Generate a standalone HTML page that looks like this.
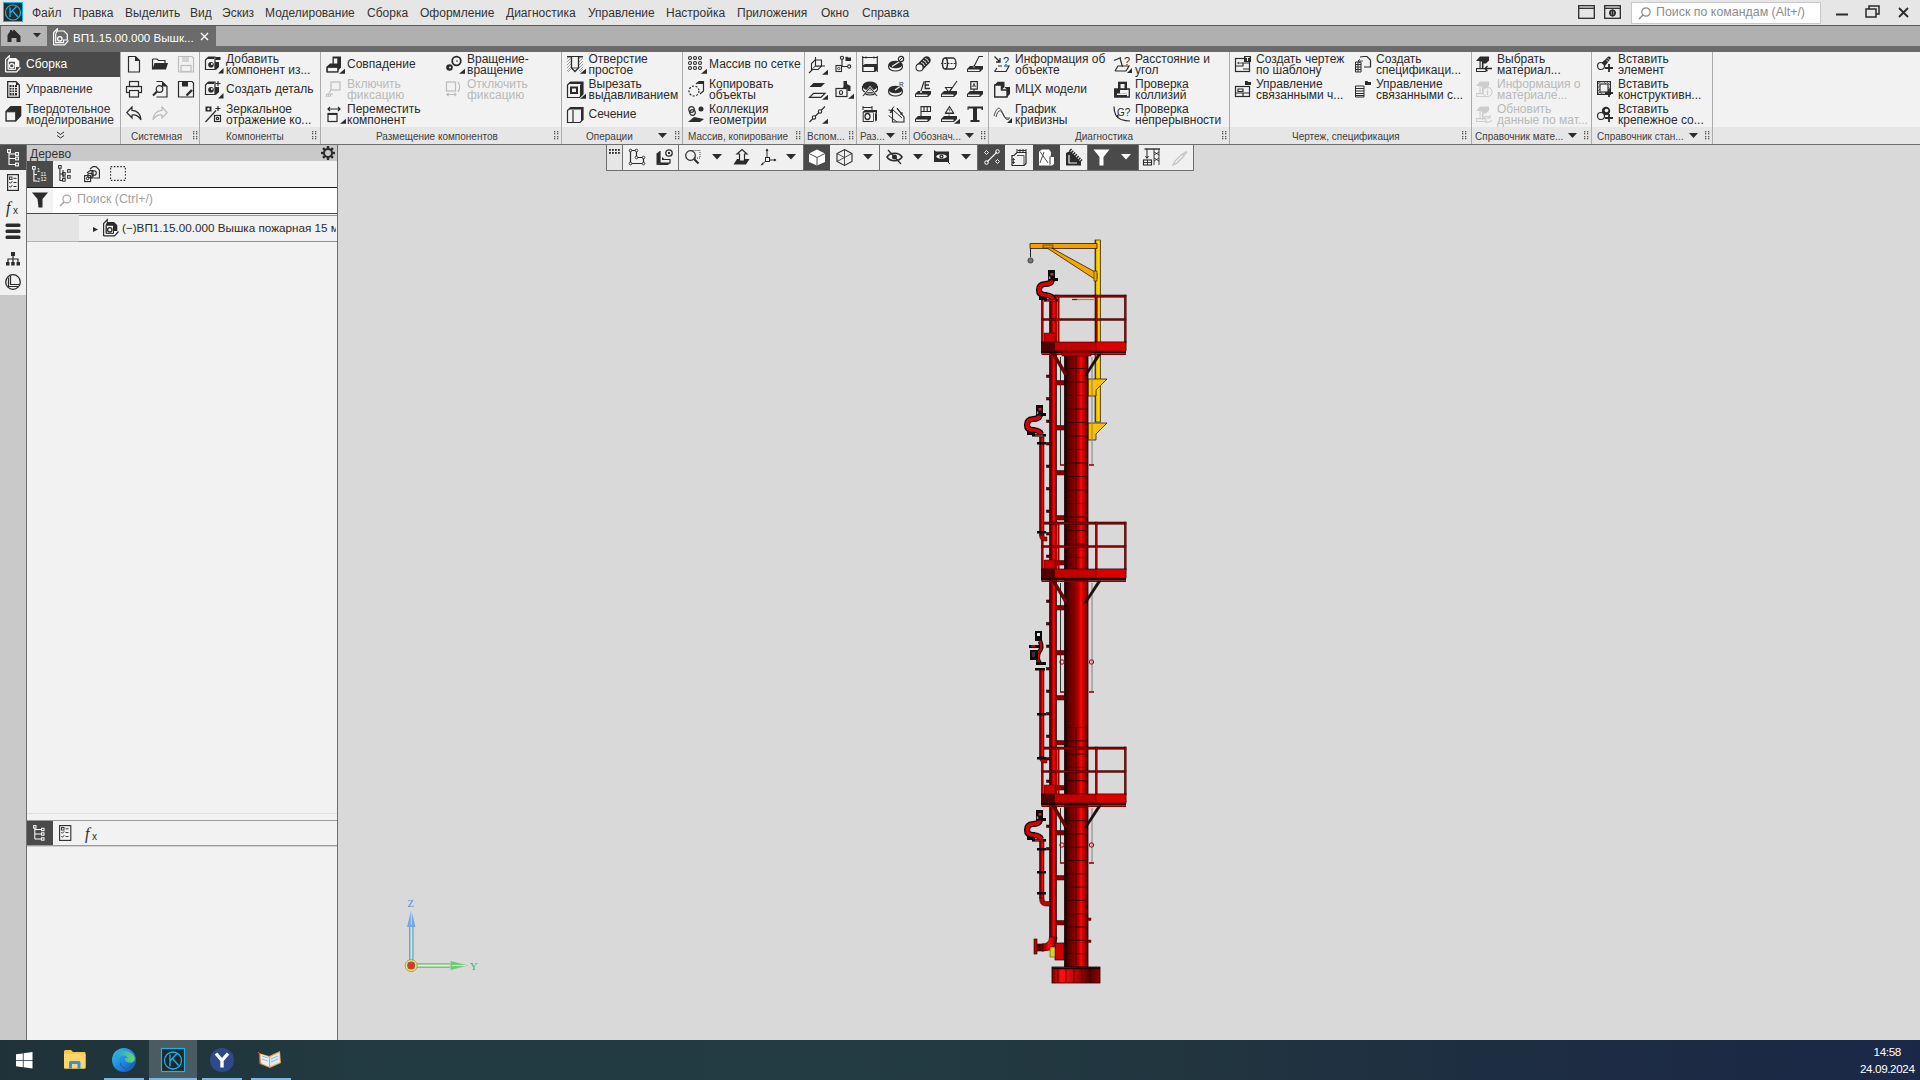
<!DOCTYPE html><html><head><meta charset="utf-8"><style>
*{margin:0;padding:0;box-sizing:border-box}
html,body{width:1920px;height:1080px;overflow:hidden;background:#d9d9d9;font-family:"Liberation Sans",sans-serif;font-size:12px;color:#2b2b2b}
.a{position:absolute}
.t{position:absolute;white-space:nowrap;line-height:1}
svg{position:absolute}
</style></head><body>
<div class="a" style="left:0px;top:0px;width:1920px;height:25px;background:#e6e6e6;"></div>
<svg class="a" style="left:3px;top:2px" width="20" height="20" viewBox="0 0 20 20"><rect x="0.5" y="0.5" width="19" height="19" fill="#2a2a2a" stroke="#10b8f0"/><circle cx="10" cy="10.5" r="7.5" fill="none" stroke="#10b8f0" stroke-width="1.2"/><path d="M7 5.5V15M7 11L13.5 4.5M9.5 9L15 15" stroke="#10b8f0" stroke-width="1.3" fill="none"/></svg>
<div class="t" style="left:32px;top:7px;font-size:12px;color:#333;">Файл</div>
<div class="t" style="left:73px;top:7px;font-size:12px;color:#333;">Правка</div>
<div class="t" style="left:125px;top:7px;font-size:12px;color:#333;">Выделить</div>
<div class="t" style="left:190px;top:7px;font-size:12px;color:#333;">Вид</div>
<div class="t" style="left:222px;top:7px;font-size:12px;color:#333;">Эскиз</div>
<div class="t" style="left:265px;top:7px;font-size:12px;color:#333;">Моделирование</div>
<div class="t" style="left:367px;top:7px;font-size:12px;color:#333;">Сборка</div>
<div class="t" style="left:420px;top:7px;font-size:12px;color:#333;">Оформление</div>
<div class="t" style="left:506px;top:7px;font-size:12px;color:#333;">Диагностика</div>
<div class="t" style="left:588px;top:7px;font-size:12px;color:#333;">Управление</div>
<div class="t" style="left:666px;top:7px;font-size:12px;color:#333;">Настройка</div>
<div class="t" style="left:737px;top:7px;font-size:12px;color:#333;">Приложения</div>
<div class="t" style="left:821px;top:7px;font-size:12px;color:#333;">Окно</div>
<div class="t" style="left:862px;top:7px;font-size:12px;color:#333;">Справка</div>
<svg class="a" style="left:1578px;top:5px" width="18" height="15" viewBox="0 0 18 15"><rect x="0.7" y="0.7" width="15.6" height="12.6" fill="none" stroke="#2b2b2b" stroke-width="1.3"/><path d="M1 3.3H16" stroke="#2b2b2b" stroke-width="1.3"/></svg>
<svg class="a" style="left:1604px;top:5px" width="18" height="15" viewBox="0 0 18 15"><rect x="0.7" y="0.7" width="15.6" height="12.6" fill="none" stroke="#2b2b2b" stroke-width="1.3"/><path d="M1 3.3H16" stroke="#2b2b2b" stroke-width="1.3"/><circle cx="8.5" cy="8" r="2.6" fill="none" stroke="#2b2b2b" stroke-width="1.6"/><path d="M8.5 4.5V11.5M5 8H12" stroke="#2b2b2b" stroke-width="1"/></svg>
<div class="a" style="left:1631px;top:2px;width:190px;height:22px;background:#ffffff;border:1px solid #c8c8c8"></div>
<svg class="a" style="left:1638px;top:6px" width="14" height="14" viewBox="0 0 14 14"><circle cx="8" cy="6" r="4.2" fill="none" stroke="#8a8a8a" stroke-width="1.2"/><path d="M5 9L1 13" stroke="#8a8a8a" stroke-width="1.5"/></svg>
<div class="t" style="left:1656px;top:6px;font-size:12.4px;color:#8c8c8c;">Поиск по командам (Alt+/)</div>
<svg class="a" style="left:1834px;top:6px" width="16" height="14" viewBox="0 0 16 14"><path d="M2 8.5H14" stroke="#2b2b2b" stroke-width="2"/></svg>
<svg class="a" style="left:1865px;top:5px" width="16" height="14" viewBox="0 0 16 14"><rect x="1" y="4" width="10" height="8" fill="none" stroke="#2b2b2b" stroke-width="1.5"/><path d="M4 4V1H14V9H11" fill="none" stroke="#2b2b2b" stroke-width="1.5"/></svg>
<svg class="a" style="left:1897px;top:6px" width="14" height="14" viewBox="0 0 14 14"><path d="M2 2L11 11M11 2L2 11" stroke="#2b2b2b" stroke-width="1.8"/></svg>
<div class="a" style="left:0px;top:25px;width:1920px;height:27px;background:#6b6b6b;"></div>
<div class="a" style="left:0px;top:25px;width:1920px;height:1px;background:#5c5c5c;"></div>
<div class="a" style="left:1px;top:26px;width:46px;height:20px;background:#b4b4b4;"></div>
<svg class="a" style="left:7px;top:29px" width="14" height="14" viewBox="0 0 14 14"><path d="M0.5 13V6L3 2.5V1H5V2.5L7 0.5L13.5 7V13H9.5V9H4.5V13Z" fill="#2b2b2b"/></svg>
<svg class="a" style="left:33px;top:33px" width="8" height="5" viewBox="0 0 8 5"><path d="M0 0H8L4 4.5Z" fill="#2b2b2b"/></svg>
<div class="a" style="left:216px;top:26px;width:1704px;height:20px;background:#b0b0b0;"></div>
<svg class="a" style="left:53px;top:28px" width="17" height="18" viewBox="0 0 17 18"><path d="M0.6 17V4.5L4.3 0.8V2.8" fill="none" stroke="#fff" stroke-width="1.2"/><path d="M0.6 16.8H11.5L15.5 12.5" fill="none" stroke="#fff" stroke-width="1.2"/><path d="M4 3H11L14.3 6.3V12H10.5V14.6H2.7V6Z" fill="none" stroke="#fff" stroke-width="1.2"/><circle cx="6.8" cy="10.8" r="2.2" fill="none" stroke="#fff" stroke-width="1.3"/></svg>
<div class="t" style="left:73px;top:32px;font-size:11.6px;color:#ffffff;">ВП1.15.00.000 Вышк...</div>
<svg class="a" style="left:200px;top:32px" width="9" height="9" viewBox="0 0 9 9"><path d="M1 1L8 8M8 1L1 8" stroke="#fff" stroke-width="1.4"/></svg>
<div class="a" style="left:0px;top:52px;width:1920px;height:92px;background:#f2f2f2;"></div>
<div class="a" style="left:0px;top:127px;width:1920px;height:17px;background:#e6e6e6;"></div>
<div class="a" style="left:0px;top:144px;width:1920px;height:1px;background:#6e6e6e;"></div>
<div class="a" style="left:0px;top:52px;width:120px;height:25px;background:#4a4a4a;"></div>
<svg class="a" style="left:5px;top:55px" width="17" height="18" viewBox="0 0 17 18"><path d="M0.6 17V4.5L4.3 0.8V2.8" fill="none" stroke="#fff" stroke-width="1.2"/><path d="M0.6 16.8H11.5L15.5 12.5" fill="none" stroke="#fff" stroke-width="1.2"/><path d="M4 3H11L14.3 6.3V12H10.5V14.6H2.7V6Z" fill="#fff"/><rect x="3.3" y="6.2" width="7.2" height="8" fill="#4a4a4a"/><path d="M3.3 6.2H10.5V14.3H3.3Z" fill="none" stroke="#fff" stroke-width="1"/><circle cx="6.8" cy="10.8" r="2.2" fill="none" stroke="#fff" stroke-width="1.3"/></svg>
<div class="t" style="left:26px;top:58px;font-size:12px;color:#ffffff;">Сборка</div>
<svg class="a" style="left:7px;top:81px" width="13" height="17" viewBox="0 0 13 17"><path d="M0.7 0.7H9L12.3 4V16.3H0.7Z" fill="none" stroke="#2b2b2b" stroke-width="1.3"/><path d="M9 0.7V4H12.3Z" fill="#2b2b2b"/><rect x="2.5" y="4" width="7.5" height="10.5" fill="#2b2b2b"/><path d="M2.5 6.5H10M2.5 9H10M2.5 11.5H10M5 4V14.5M7.5 4V14.5" stroke="#f2f2f2" stroke-width="0.9"/></svg>
<div class="t" style="left:26px;top:83px;font-size:12px;color:#333;">Управление</div>
<svg class="a" style="left:5px;top:105px" width="17" height="17" viewBox="0 0 17 17"><path d="M0.5 6L5.5 1H16.3V11L11 16.5H0.5Z" fill="#2b2b2b"/><rect x="1.2" y="6.8" width="9.5" height="9" fill="#f2f2f2" stroke="#2b2b2b" stroke-width="1"/></svg>
<div class="t" style="left:26px;top:103px;font-size:12px;color:#333;">Твердотельное</div>
<div class="t" style="left:26px;top:114px;font-size:12px;color:#333;">моделирование</div>
<svg class="a" style="left:56px;top:131px" width="9" height="8" viewBox="0 0 9 8"><path d="M1 1L4.5 3.5L8 1M1 4.5L4.5 7L8 4.5" fill="none" stroke="#2b2b2b" stroke-width="1"/></svg>
<div class="a" style="left:120px;top:52px;width:1px;height:92px;background:#ababab;"></div>
<div class="a" style="left:199px;top:52px;width:1px;height:92px;background:#ababab;"></div>
<div class="a" style="left:320px;top:52px;width:1px;height:92px;background:#ababab;"></div>
<div class="a" style="left:561px;top:52px;width:1px;height:92px;background:#ababab;"></div>
<div class="a" style="left:682px;top:52px;width:1px;height:92px;background:#ababab;"></div>
<div class="a" style="left:804px;top:52px;width:1px;height:92px;background:#ababab;"></div>
<div class="a" style="left:856px;top:52px;width:1px;height:92px;background:#ababab;"></div>
<div class="a" style="left:909px;top:52px;width:1px;height:92px;background:#ababab;"></div>
<div class="a" style="left:988px;top:52px;width:1px;height:92px;background:#ababab;"></div>
<div class="a" style="left:1229px;top:52px;width:1px;height:92px;background:#ababab;"></div>
<div class="a" style="left:1471px;top:52px;width:1px;height:92px;background:#ababab;"></div>
<div class="a" style="left:1591px;top:52px;width:1px;height:92px;background:#ababab;"></div>
<div class="a" style="left:1712px;top:52px;width:1px;height:92px;background:#ababab;"></div>
<div class="t" style="left:131px;top:132px;font-size:10px;color:#3e3e3e;">Системная</div>
<div class="t" style="left:226px;top:132px;font-size:10px;color:#3e3e3e;">Компоненты</div>
<div class="t" style="left:376px;top:132px;font-size:10px;color:#3e3e3e;">Размещение компонентов</div>
<div class="t" style="left:586px;top:132px;font-size:10px;color:#3e3e3e;">Операции</div>
<div class="t" style="left:688px;top:132px;font-size:10px;color:#3e3e3e;">Массив, копирование</div>
<div class="t" style="left:807px;top:132px;font-size:10px;color:#3e3e3e;">Вспом...</div>
<div class="t" style="left:860px;top:132px;font-size:10px;color:#3e3e3e;">Раз...</div>
<div class="t" style="left:913px;top:132px;font-size:10px;color:#3e3e3e;">Обознач...</div>
<div class="t" style="left:1075px;top:132px;font-size:10px;color:#3e3e3e;">Диагностика</div>
<div class="t" style="left:1292px;top:132px;font-size:10px;color:#3e3e3e;">Чертеж, спецификация</div>
<div class="t" style="left:1475px;top:132px;font-size:10px;color:#3e3e3e;">Справочник мате...</div>
<div class="t" style="left:1597px;top:132px;font-size:10px;color:#3e3e3e;">Справочник стан...</div>
<svg class="a" style="left:193px;top:131px" width="6" height="10" viewBox="0 0 6 10"><rect x="0" y="0" width="1.3" height="1.3" fill="#555"/><rect x="0" y="2" width="1.3" height="1.3" fill="#555"/><rect x="0" y="5" width="1.3" height="1.3" fill="#555"/><rect x="0" y="7" width="1.3" height="1.3" fill="#555"/><rect x="3" y="0" width="1.3" height="1.3" fill="#555"/><rect x="3" y="2" width="1.3" height="1.3" fill="#555"/><rect x="3" y="5" width="1.3" height="1.3" fill="#555"/><rect x="3" y="7" width="1.3" height="1.3" fill="#555"/></svg>
<svg class="a" style="left:312px;top:131px" width="6" height="10" viewBox="0 0 6 10"><rect x="0" y="0" width="1.3" height="1.3" fill="#555"/><rect x="0" y="2" width="1.3" height="1.3" fill="#555"/><rect x="0" y="5" width="1.3" height="1.3" fill="#555"/><rect x="0" y="7" width="1.3" height="1.3" fill="#555"/><rect x="3" y="0" width="1.3" height="1.3" fill="#555"/><rect x="3" y="2" width="1.3" height="1.3" fill="#555"/><rect x="3" y="5" width="1.3" height="1.3" fill="#555"/><rect x="3" y="7" width="1.3" height="1.3" fill="#555"/></svg>
<svg class="a" style="left:554px;top:131px" width="6" height="10" viewBox="0 0 6 10"><rect x="0" y="0" width="1.3" height="1.3" fill="#555"/><rect x="0" y="2" width="1.3" height="1.3" fill="#555"/><rect x="0" y="5" width="1.3" height="1.3" fill="#555"/><rect x="0" y="7" width="1.3" height="1.3" fill="#555"/><rect x="3" y="0" width="1.3" height="1.3" fill="#555"/><rect x="3" y="2" width="1.3" height="1.3" fill="#555"/><rect x="3" y="5" width="1.3" height="1.3" fill="#555"/><rect x="3" y="7" width="1.3" height="1.3" fill="#555"/></svg>
<svg class="a" style="left:675px;top:131px" width="6" height="10" viewBox="0 0 6 10"><rect x="0" y="0" width="1.3" height="1.3" fill="#555"/><rect x="0" y="2" width="1.3" height="1.3" fill="#555"/><rect x="0" y="5" width="1.3" height="1.3" fill="#555"/><rect x="0" y="7" width="1.3" height="1.3" fill="#555"/><rect x="3" y="0" width="1.3" height="1.3" fill="#555"/><rect x="3" y="2" width="1.3" height="1.3" fill="#555"/><rect x="3" y="5" width="1.3" height="1.3" fill="#555"/><rect x="3" y="7" width="1.3" height="1.3" fill="#555"/></svg>
<svg class="a" style="left:796px;top:131px" width="6" height="10" viewBox="0 0 6 10"><rect x="0" y="0" width="1.3" height="1.3" fill="#555"/><rect x="0" y="2" width="1.3" height="1.3" fill="#555"/><rect x="0" y="5" width="1.3" height="1.3" fill="#555"/><rect x="0" y="7" width="1.3" height="1.3" fill="#555"/><rect x="3" y="0" width="1.3" height="1.3" fill="#555"/><rect x="3" y="2" width="1.3" height="1.3" fill="#555"/><rect x="3" y="5" width="1.3" height="1.3" fill="#555"/><rect x="3" y="7" width="1.3" height="1.3" fill="#555"/></svg>
<svg class="a" style="left:849px;top:131px" width="6" height="10" viewBox="0 0 6 10"><rect x="0" y="0" width="1.3" height="1.3" fill="#555"/><rect x="0" y="2" width="1.3" height="1.3" fill="#555"/><rect x="0" y="5" width="1.3" height="1.3" fill="#555"/><rect x="0" y="7" width="1.3" height="1.3" fill="#555"/><rect x="3" y="0" width="1.3" height="1.3" fill="#555"/><rect x="3" y="2" width="1.3" height="1.3" fill="#555"/><rect x="3" y="5" width="1.3" height="1.3" fill="#555"/><rect x="3" y="7" width="1.3" height="1.3" fill="#555"/></svg>
<svg class="a" style="left:902px;top:131px" width="6" height="10" viewBox="0 0 6 10"><rect x="0" y="0" width="1.3" height="1.3" fill="#555"/><rect x="0" y="2" width="1.3" height="1.3" fill="#555"/><rect x="0" y="5" width="1.3" height="1.3" fill="#555"/><rect x="0" y="7" width="1.3" height="1.3" fill="#555"/><rect x="3" y="0" width="1.3" height="1.3" fill="#555"/><rect x="3" y="2" width="1.3" height="1.3" fill="#555"/><rect x="3" y="5" width="1.3" height="1.3" fill="#555"/><rect x="3" y="7" width="1.3" height="1.3" fill="#555"/></svg>
<svg class="a" style="left:981px;top:131px" width="6" height="10" viewBox="0 0 6 10"><rect x="0" y="0" width="1.3" height="1.3" fill="#555"/><rect x="0" y="2" width="1.3" height="1.3" fill="#555"/><rect x="0" y="5" width="1.3" height="1.3" fill="#555"/><rect x="0" y="7" width="1.3" height="1.3" fill="#555"/><rect x="3" y="0" width="1.3" height="1.3" fill="#555"/><rect x="3" y="2" width="1.3" height="1.3" fill="#555"/><rect x="3" y="5" width="1.3" height="1.3" fill="#555"/><rect x="3" y="7" width="1.3" height="1.3" fill="#555"/></svg>
<svg class="a" style="left:1222px;top:131px" width="6" height="10" viewBox="0 0 6 10"><rect x="0" y="0" width="1.3" height="1.3" fill="#555"/><rect x="0" y="2" width="1.3" height="1.3" fill="#555"/><rect x="0" y="5" width="1.3" height="1.3" fill="#555"/><rect x="0" y="7" width="1.3" height="1.3" fill="#555"/><rect x="3" y="0" width="1.3" height="1.3" fill="#555"/><rect x="3" y="2" width="1.3" height="1.3" fill="#555"/><rect x="3" y="5" width="1.3" height="1.3" fill="#555"/><rect x="3" y="7" width="1.3" height="1.3" fill="#555"/></svg>
<svg class="a" style="left:1462px;top:131px" width="6" height="10" viewBox="0 0 6 10"><rect x="0" y="0" width="1.3" height="1.3" fill="#555"/><rect x="0" y="2" width="1.3" height="1.3" fill="#555"/><rect x="0" y="5" width="1.3" height="1.3" fill="#555"/><rect x="0" y="7" width="1.3" height="1.3" fill="#555"/><rect x="3" y="0" width="1.3" height="1.3" fill="#555"/><rect x="3" y="2" width="1.3" height="1.3" fill="#555"/><rect x="3" y="5" width="1.3" height="1.3" fill="#555"/><rect x="3" y="7" width="1.3" height="1.3" fill="#555"/></svg>
<svg class="a" style="left:1584px;top:131px" width="6" height="10" viewBox="0 0 6 10"><rect x="0" y="0" width="1.3" height="1.3" fill="#555"/><rect x="0" y="2" width="1.3" height="1.3" fill="#555"/><rect x="0" y="5" width="1.3" height="1.3" fill="#555"/><rect x="0" y="7" width="1.3" height="1.3" fill="#555"/><rect x="3" y="0" width="1.3" height="1.3" fill="#555"/><rect x="3" y="2" width="1.3" height="1.3" fill="#555"/><rect x="3" y="5" width="1.3" height="1.3" fill="#555"/><rect x="3" y="7" width="1.3" height="1.3" fill="#555"/></svg>
<svg class="a" style="left:1705px;top:131px" width="6" height="10" viewBox="0 0 6 10"><rect x="0" y="0" width="1.3" height="1.3" fill="#555"/><rect x="0" y="2" width="1.3" height="1.3" fill="#555"/><rect x="0" y="5" width="1.3" height="1.3" fill="#555"/><rect x="0" y="7" width="1.3" height="1.3" fill="#555"/><rect x="3" y="0" width="1.3" height="1.3" fill="#555"/><rect x="3" y="2" width="1.3" height="1.3" fill="#555"/><rect x="3" y="5" width="1.3" height="1.3" fill="#555"/><rect x="3" y="7" width="1.3" height="1.3" fill="#555"/></svg>
<svg class="a" style="left:658px;top:133px" width="9" height="6" viewBox="0 0 9 6"><path d="M0 0H9L4.5 5Z" fill="#2b2b2b"/></svg>
<svg class="a" style="left:886px;top:133px" width="9" height="6" viewBox="0 0 9 6"><path d="M0 0H9L4.5 5Z" fill="#2b2b2b"/></svg>
<svg class="a" style="left:965px;top:133px" width="9" height="6" viewBox="0 0 9 6"><path d="M0 0H9L4.5 5Z" fill="#2b2b2b"/></svg>
<svg class="a" style="left:1568px;top:133px" width="9" height="6" viewBox="0 0 9 6"><path d="M0 0H9L4.5 5Z" fill="#2b2b2b"/></svg>
<svg class="a" style="left:1689px;top:133px" width="9" height="6" viewBox="0 0 9 6"><path d="M0 0H9L4.5 5Z" fill="#2b2b2b"/></svg>
<svg class="a" style="left:127px;top:56px;overflow:visible" width="16" height="16" viewBox="0 0 16 16"><path d="M1.5 0.5H8.5L12.5 4.5V16H1.5Z" fill="none" stroke="#2b2b2b" stroke-width="1.2"/><path d="M8 0.5V5H12.5z" fill="#2b2b2b"/></svg>
<svg class="a" style="left:152px;top:57px;overflow:visible" width="16" height="16" viewBox="0 0 16 16"><path d="M0.5 2H5L6.5 3.5H13V6" fill="none" stroke="#2b2b2b" stroke-width="1.2"/><path d="M0.5 12.5L2.5 6H16L14 12.5Z" fill="#2b2b2b"/><path d="M0.5 2V12.5" fill="none" stroke="#2b2b2b" stroke-width="1.2"/></svg>
<svg class="a" style="left:178px;top:56px;overflow:visible" width="16" height="16" viewBox="0 0 16 16"><path d="M0.5 0.5H14L15.5 2V16H0.5Z" fill="none" stroke="#bdbdbd" stroke-width="1.2"/><rect x="4" y="1" width="7" height="5" fill="#d4d4d4"/><rect x="3" y="9.5" width="10" height="6" fill="none" stroke="#bdbdbd" stroke-width="1.2"/></svg>
<svg class="a" style="left:126px;top:81px;overflow:visible" width="16" height="16" viewBox="0 0 16 16"><rect x="3.5" y="0.5" width="9" height="5" fill="none" stroke="#2b2b2b" stroke-width="1.2"/><rect x="0.5" y="5.5" width="15" height="6" fill="none" stroke="#2b2b2b" stroke-width="1.2"/><rect x="3.5" y="9.5" width="9" height="6.5" fill="#f0f0f0" stroke="#2b2b2b" stroke-width="1.2"/></svg>
<svg class="a" style="left:152px;top:81px;overflow:visible" width="16" height="16" viewBox="0 0 16 16"><path d="M4.5 0.5H10L15 5.5V16H4.5" fill="none" stroke="#2b2b2b" stroke-width="1.2"/><path d="M10 0.5V5.5H15z" fill="#2b2b2b"/><circle cx="7.5" cy="8" r="3.3" fill="none" stroke="#2b2b2b" stroke-width="1.2"/><path d="M5 10.5L1 14.5" stroke="#2b2b2b" stroke-width="2"/></svg>
<svg class="a" style="left:178px;top:81px;overflow:visible" width="16" height="16" viewBox="0 0 16 16"><path d="M0.5 0.5H14L15.5 2V16H0.5Z" fill="none" stroke="#2b2b2b" stroke-width="1.2"/><rect x="4" y="1" width="6" height="4.5" fill="#2b2b2b"/><path d="M8.5 14.5L14 9" stroke="#2b2b2b" stroke-width="2.4"/></svg>
<svg class="a" style="left:126px;top:106px;overflow:visible" width="16" height="16" viewBox="0 0 16 16"><path d="M6 1L0.8 6.5L6 12V9C10 8.5 13 10.5 15 14C14.5 8 11 4.5 6 4.3Z" fill="none" stroke="#2b2b2b" stroke-width="1.2"/></svg>
<svg class="a" style="left:152px;top:106px;overflow:visible" width="16" height="16" viewBox="0 0 16 16"><path d="M10 1L15.2 6.5L10 12V9C6 8.5 3 10.5 1 14C1.5 8 5 4.5 10 4.3Z" fill="none" stroke="#bdbdbd" stroke-width="1.2"/></svg>
<div class="t" style="left:226px;top:53px;font-size:12px;color:#2b2b2b;">Добавить</div>
<div class="t" style="left:226px;top:63.5px;font-size:12px;color:#2b2b2b;">компонент из...</div>
<svg class="a" style="left:205px;top:56px;overflow:visible" width="16" height="16" viewBox="0 0 16 16"><path d="M0.5 4L3.5 1H10V13.5H0.5Z" fill="none" stroke="#2b2b2b" stroke-width="1.2"/><path d="M3.5 1H9V3H1.5z" fill="#2b2b2b"/><rect x="10.5" y="1" width="5" height="3" fill="#2b2b2b"/><path d="M10 6H14V11L11.5 13.5H10" fill="#2b2b2b"/><circle cx="6" cy="8.7" r="2.8" fill="#2b2b2b"/><circle cx="6.8" cy="8" r="1" fill="#f0f0f0"/><path d="M13 17.5H18.5V12z" fill="#2b2b2b"/></svg>
<div class="t" style="left:226px;top:83px;font-size:12px;color:#2b2b2b;">Создать деталь</div>
<svg class="a" style="left:205px;top:81px;overflow:visible" width="16" height="16" viewBox="0 0 16 16"><path d="M0.5 4L3.5 1H10V13.5H0.5Z" fill="none" stroke="#2b2b2b" stroke-width="1.2"/><path d="M3.5 1H9V3H1.5z" fill="#2b2b2b"/><path d="M13 0V5M10.5 2.5H15.5" fill="none" stroke="#2b2b2b" stroke-width="1.2"/><path d="M10 6H14V11L11.5 13.5H10" fill="#2b2b2b"/><circle cx="6" cy="8.7" r="2.8" fill="#2b2b2b"/><circle cx="6.8" cy="8" r="1" fill="#f0f0f0"/><path d="M13 17.5H18.5V12z" fill="#2b2b2b"/></svg>
<div class="t" style="left:226px;top:103px;font-size:12px;color:#2b2b2b;">Зеркальное</div>
<div class="t" style="left:226px;top:113.5px;font-size:12px;color:#2b2b2b;">отражение ко...</div>
<svg class="a" style="left:205px;top:106px;overflow:visible" width="16" height="16" viewBox="0 0 16 16"><rect x="0.5" y="0.5" width="6" height="5" fill="#2b2b2b"/><circle cx="3.5" cy="3" r="1.2" fill="#f0f0f0"/><path d="M0.5 16L11 4.5" fill="none" stroke="#2b2b2b" stroke-width="1.2"/><path d="M13 0V5M10.5 2.5H15.5" fill="none" stroke="#2b2b2b" stroke-width="1.2"/><rect x="9.5" y="9.5" width="6" height="6" fill="none" stroke="#2b2b2b" stroke-width="1.2"/><circle cx="12.5" cy="12.5" r="1.2" fill="none" stroke="#2b2b2b" stroke-width="1.2"/></svg>
<div class="t" style="left:347px;top:58px;font-size:12px;color:#2b2b2b;">Совпадение</div>
<svg class="a" style="left:326px;top:56px;overflow:visible" width="16" height="16" viewBox="0 0 16 16"><path d="M6.5 0.5H15V11.5L12.5 14H6.5Z" fill="#2b2b2b"/><rect x="7.8" y="2.5" width="3.5" height="8.5" fill="#f2f2f2"/><path d="M0.3 11L4 7.5H12.5V16.5H0.3Z" fill="#2b2b2b"/><rect x="1.3" y="11.3" width="10.5" height="4.5" fill="#f2f2f2" stroke="#2b2b2b" stroke-width="1"/><path d="M13 17.7H19V12.7z" fill="#2b2b2b"/></svg>
<div class="t" style="left:347px;top:78px;font-size:12px;color:#b9b9b9;">Включить</div>
<div class="t" style="left:347px;top:88.5px;font-size:12px;color:#b9b9b9;">фиксацию</div>
<svg class="a" style="left:326px;top:81px;overflow:visible" width="16" height="16" viewBox="0 0 16 16"><rect x="5" y="1" width="9" height="8" fill="none" stroke="#bdbdbd" stroke-width="1.2"/><path d="M5 9L3 12M0.5 13H7M1 13L0 16M3 13L2 16M5 13L4 16" fill="none" stroke="#bdbdbd" stroke-width="1.2"/></svg>
<div class="t" style="left:347px;top:103px;font-size:12px;color:#2b2b2b;">Переместить</div>
<div class="t" style="left:347px;top:113.5px;font-size:12px;color:#2b2b2b;">компонент</div>
<svg class="a" style="left:327px;top:106px;overflow:visible" width="16" height="16" viewBox="0 0 16 16"><path d="M1 3H13M3 1L1 3L3 5M11 1L13 3L11 5" fill="none" stroke="#2b2b2b" stroke-width="1.2"/><rect x="1" y="7.5" width="9" height="8" fill="none" stroke="#2b2b2b" stroke-width="1.2"/><path d="M1 7.5H10V9H1Z" fill="#2b2b2b"/><path d="M13 17.7H19V12.7z" fill="#2b2b2b"/></svg>
<div class="t" style="left:467px;top:53px;font-size:12px;color:#2b2b2b;">Вращение-</div>
<div class="t" style="left:467px;top:63.5px;font-size:12px;color:#2b2b2b;">вращение</div>
<svg class="a" style="left:446px;top:56px;overflow:visible" width="16" height="16" viewBox="0 0 16 16"><circle cx="10.5" cy="5" r="4.3" fill="none" stroke="#2b2b2b" stroke-width="1.8"/><circle cx="3.5" cy="11.5" r="3.3" fill="#2b2b2b"/><circle cx="4" cy="11.6" r="1" fill="#f2f2f2"/><circle cx="11" cy="5" r="0.8" fill="#2b2b2b"/><path d="M13 17.7H19V12.7z" fill="#2b2b2b"/></svg>
<div class="t" style="left:467px;top:78px;font-size:12px;color:#b9b9b9;">Отключить</div>
<div class="t" style="left:467px;top:88.5px;font-size:12px;color:#b9b9b9;">фиксацию</div>
<svg class="a" style="left:446px;top:81px;overflow:visible" width="16" height="16" viewBox="0 0 16 16"><rect x="0.5" y="1" width="9" height="9" fill="none" stroke="#bdbdbd" stroke-width="1.2"/><path d="M12 1C14 4 14 8 12 11M1 13.5H10M2.5 12L1 13.5L2.5 15M8.5 12L10 13.5L8.5 15" fill="none" stroke="#bdbdbd" stroke-width="1.2"/></svg>
<div class="t" style="left:588.5px;top:53px;font-size:12px;color:#2b2b2b;">Отверстие</div>
<div class="t" style="left:588.5px;top:63.5px;font-size:12px;color:#2b2b2b;">простое</div>
<svg class="a" style="left:567px;top:56px;overflow:visible" width="16" height="16" viewBox="0 0 16 16"><path d="M0 0.7H16" stroke="#2b2b2b" stroke-width="1.4"/><path d="M0 3L2 1M0 6L4 2M0 9L4 5M0 12L4 8M0 15L4 11M1 16L4 13M12 3L14 1M12 6L16 2M12 9L16 5M12 12L16 8M12 15L16 11M13 16L16 13" stroke="#8a8a8a" stroke-width="0.8"/><path d="M4.5 1V12L8 15.5L11.5 12V1" fill="#f2f2f2" stroke="#2b2b2b" stroke-width="1.3"/><path d="M4.5 12H11.5" stroke="#2b2b2b" stroke-width="0.8"/><path d="M13 17.7H19V12.7z" fill="#2b2b2b"/></svg>
<div class="t" style="left:588.5px;top:78px;font-size:12px;color:#2b2b2b;">Вырезать</div>
<div class="t" style="left:588.5px;top:88.5px;font-size:12px;color:#2b2b2b;">выдавливанием</div>
<svg class="a" style="left:567px;top:81px;overflow:visible" width="16" height="16" viewBox="0 0 16 16"><path d="M0.5 4L3.5 1H16V13L12.5 16.5H0.5Z" fill="none" stroke="#2b2b2b" stroke-width="1.2"/><path d="M3.5 1H16V3H1.5z" fill="#2b2b2b"/><path d="M16 1V13L13 16V4z" fill="#2b2b2b"/><rect x="3" y="5.5" width="8" height="7.5" fill="#2b2b2b"/><rect x="5" y="7.5" width="4" height="3.5" fill="#f0f0f0"/><path d="M13 17.7H19V12.7z" fill="#2b2b2b"/></svg>
<div class="t" style="left:588.5px;top:108px;font-size:12px;color:#2b2b2b;">Сечение</div>
<svg class="a" style="left:567px;top:106px;overflow:visible" width="16" height="16" viewBox="0 0 16 16"><path d="M0.5 4.5L3.5 1.5H16V13.5L13 16.5H0.5Z" fill="none" stroke="#2b2b2b" stroke-width="1.2"/><path d="M3.5 1.5H16V3.5H1.5z" fill="#2b2b2b"/><path d="M6 4V16.5" fill="none" stroke="#2b2b2b" stroke-width="1.2"/><path d="M16 1.5V13.5L14 15.5V3.5z" fill="#2b2b2b"/></svg>
<div class="t" style="left:709px;top:58px;font-size:12px;color:#2b2b2b;">Массив по сетке</div>
<svg class="a" style="left:688px;top:56px;overflow:visible" width="16" height="16" viewBox="0 0 16 16"><circle cx="2" cy="2" r="1.5" fill="none" stroke="#2b2b2b" stroke-width="1.1"/><circle cx="2" cy="7" r="1.5" fill="none" stroke="#2b2b2b" stroke-width="1.1"/><circle cx="2" cy="12" r="1.5" fill="none" stroke="#2b2b2b" stroke-width="1.1"/><circle cx="7" cy="2" r="1.5" fill="none" stroke="#2b2b2b" stroke-width="1.1"/><circle cx="7" cy="7" r="1.5" fill="none" stroke="#2b2b2b" stroke-width="1.1"/><circle cx="7" cy="12" r="1.5" fill="none" stroke="#2b2b2b" stroke-width="1.1"/><circle cx="12" cy="2" r="1.5" fill="none" stroke="#2b2b2b" stroke-width="1.1"/><circle cx="12" cy="7" r="1.5" fill="none" stroke="#2b2b2b" stroke-width="1.1"/><circle cx="12" cy="12" r="1.5" fill="none" stroke="#2b2b2b" stroke-width="1.1"/><path d="M13 17.7H19V12.7z" fill="#2b2b2b"/></svg>
<div class="t" style="left:709px;top:78px;font-size:12px;color:#2b2b2b;">Копировать</div>
<div class="t" style="left:709px;top:88.5px;font-size:12px;color:#2b2b2b;">объекты</div>
<svg class="a" style="left:688px;top:81px;overflow:visible" width="16" height="16" viewBox="0 0 16 16"><circle cx="6" cy="10" r="5" fill="none" stroke="#2b2b2b" stroke-width="1.2" stroke-dasharray="2 1.5"/><path d="M8 3L11 0.5H15.5V10L12 13" fill="none" stroke="#2b2b2b" stroke-width="1.2"/><path d="M11 0.5H15.5V3H9z" fill="#2b2b2b"/></svg>
<div class="t" style="left:709px;top:103px;font-size:12px;color:#2b2b2b;">Коллекция</div>
<div class="t" style="left:709px;top:113.5px;font-size:12px;color:#2b2b2b;">геометрии</div>
<svg class="a" style="left:688px;top:106px;overflow:visible" width="16" height="16" viewBox="0 0 16 16"><circle cx="3.5" cy="3.5" r="2.8" fill="none" stroke="#2b2b2b" stroke-width="1.2"/><circle cx="4.5" cy="6.5" r="2.8" fill="none" stroke="#2b2b2b" stroke-width="1.2"/><circle cx="13" cy="3" r="2.5" fill="#2b2b2b"/><path d="M0 16L6 11L16 13L12 16Z" fill="#2b2b2b"/></svg>
<svg class="a" style="left:809px;top:57px;overflow:visible" width="16" height="16" viewBox="0 0 16 16"><path d="M6.5 0V9.5M6.5 9H16M0 16L6 10" fill="none" stroke="#2b2b2b" stroke-width="1.1"/><path d="M2.5 12.5V6.5L6 3H12.5V9L9 12.5Z" fill="none" stroke="#2b2b2b" stroke-width="1.1"/><path d="M2.5 12.5L6 9H12.5L9 12.5Z" fill="#2b2b2b"/><path d="M3.3 12L6.3 9.8H11.2L8.7 12Z" fill="#f2f2f2"/><path d="M13 17.7H19V12.7z" fill="#2b2b2b"/></svg>
<svg class="a" style="left:835px;top:56px;overflow:visible" width="16" height="16" viewBox="0 0 16 16"><circle cx="7" cy="1.8" r="1.6" fill="none" stroke="#2b2b2b" stroke-width="1.1"/><path d="M7 3.4V10.5H12.5" fill="none" stroke="#2b2b2b" stroke-width="1.1"/><circle cx="14.2" cy="10.5" r="1.6" fill="none" stroke="#2b2b2b" stroke-width="1.1"/><rect x="1" y="9.5" width="5.5" height="6" fill="none" stroke="#2b2b2b" stroke-width="1.1"/><circle cx="3.8" cy="12.5" r="1.2" fill="none" stroke="#2b2b2b" stroke-width="0.8"/><rect x="10.5" y="1.5" width="5.5" height="3.5" fill="#2b2b2b"/><rect x="10.5" y="0.8" width="2.5" height="1" fill="#2b2b2b"/></svg>
<svg class="a" style="left:809px;top:82px;overflow:visible" width="16" height="16" viewBox="0 0 16 16"><path d="M0.5 5L4.5 1H16L12 5Z" fill="#2b2b2b"/><path d="M0.5 15.3L4.5 11.3H16L12 15.3Z" fill="none" stroke="#2b2b2b" stroke-width="1.2"/><path d="M13 17.7H19V12.7z" fill="#2b2b2b"/></svg>
<svg class="a" style="left:835px;top:81px;overflow:visible" width="16" height="16" viewBox="0 0 16 16"><rect x="1" y="7.5" width="11" height="8" fill="none" stroke="#2b2b2b" stroke-width="1.2"/><ellipse cx="6" cy="11.5" rx="1.6" ry="2" fill="none" stroke="#2b2b2b" stroke-width="1.2"/><path d="M8.5 0H12V3L15.5 5V10H12.5V7.5H7L8.5 6Z" fill="#2b2b2b"/><path d="M13 17.7H19V12.7z" fill="#2b2b2b"/></svg>
<svg class="a" style="left:809px;top:106px;overflow:visible" width="16" height="16" viewBox="0 0 16 16"><path d="M0.5 16L16 0.5" fill="none" stroke="#2b2b2b" stroke-width="1.1"/><circle cx="5" cy="11.5" r="1.7" fill="#f2f2f2" stroke="#2b2b2b" stroke-width="1.1"/><circle cx="11" cy="5.5" r="1.7" fill="#f2f2f2" stroke="#2b2b2b" stroke-width="1.1"/><path d="M13 17.7H19V12.7z" fill="#2b2b2b"/></svg>
<svg class="a" style="left:862px;top:56px;overflow:visible" width="16" height="16" viewBox="0 0 16 16"><path d="M0.7 0V16M15.3 0V16M0.7 1.5H15.3M4 0.5V2.5M12 0.5V2.5" fill="none" stroke="#2b2b2b" stroke-width="1.1"/><path d="M0.7 9.5L3 8H15.3V14L13 16H0.7Z" fill="#2b2b2b"/><rect x="1.5" y="11" width="10.5" height="4" fill="#f2f2f2"/></svg>
<svg class="a" style="left:888px;top:56px;overflow:visible" width="16" height="16" viewBox="0 0 16 16"><ellipse cx="7.5" cy="10.5" rx="7" ry="4.5" fill="none" stroke="#2b2b2b" stroke-width="1.2"/><ellipse cx="7.5" cy="8.5" rx="7" ry="3.8" fill="#2b2b2b"/><path d="M4 10.5L12.5 5" stroke="#f2f2f2" stroke-width="1.2"/><circle cx="13" cy="3" r="2.6" fill="none" stroke="#2b2b2b" stroke-width="1.2"/><path d="M11.5 4.5L14.5 1.5" fill="none" stroke="#2b2b2b" stroke-width="1"/></svg>
<svg class="a" style="left:862px;top:81px;overflow:visible" width="16" height="16" viewBox="0 0 16 16"><ellipse cx="8" cy="5" rx="7.5" ry="4.5" fill="#2b2b2b"/><path d="M0.5 5V8.5C2 13 14 13 15.5 8.5V5" fill="none" stroke="#2b2b2b" stroke-width="1.1"/><path d="M1 15L8 6.5L15 15" stroke="#f2f2f2" stroke-width="2.2" fill="none"/><path d="M1 15L8 6.5L15 15" fill="none" stroke="#2b2b2b" stroke-width="1.1"/><path d="M3 12.5C5 14.5 11 14.5 13 12.5" fill="none" stroke="#2b2b2b" stroke-width="1.1"/></svg>
<svg class="a" style="left:888px;top:81px;overflow:visible" width="16" height="16" viewBox="0 0 16 16"><ellipse cx="7.5" cy="10.5" rx="7" ry="4.5" fill="none" stroke="#2b2b2b" stroke-width="1.2"/><ellipse cx="7.5" cy="8.5" rx="7" ry="3.8" fill="#2b2b2b"/><path d="M7 9L12 5.5" stroke="#f2f2f2" stroke-width="1.2"/><text x="11" y="6" font-size="6.5" fill="#2b2b2b" font-family="Liberation Sans">R</text></svg>
<svg class="a" style="left:862px;top:106px;overflow:visible" width="16" height="16" viewBox="0 0 16 16"><path d="M1 0V4M10 0V4M1 1.5H10" fill="none" stroke="#2b2b2b" stroke-width="1"/><path d="M0.7 6L2.5 4H15V14.5L13 16H0.7Z" fill="#2b2b2b"/><rect x="1.7" y="6.5" width="9.5" height="8.5" fill="#f2f2f2"/><ellipse cx="5.5" cy="10.5" rx="2.5" ry="3" fill="none" stroke="#2b2b2b" stroke-width="1.3"/><path d="M12.5 6V16M11 7.5L12.5 6L14 7.5M11 14.5L12.5 16L14 14.5" stroke="#f2f2f2" stroke-width="1"/></svg>
<svg class="a" style="left:888px;top:106px;overflow:visible" width="16" height="16" viewBox="0 0 16 16"><path d="M2 7L4.5 3.5V16H16V11L9 2.5" fill="none" stroke="#2b2b2b" stroke-width="1.1"/><path d="M0.5 9.5L9 16M4.5 3.5L14 12" fill="none" stroke="#2b2b2b" stroke-width="1"/><path d="M6 0.5L3 4.5M0.5 4L3.5 4.5L3 7M9 2L14 8M12 8L14 8L14 6" fill="none" stroke="#2b2b2b" stroke-width="1"/></svg>
<svg class="a" style="left:915px;top:56px;overflow:visible" width="16" height="16" viewBox="0 0 16 16"><path d="M1.7 8.7L9.2 1.2A4 4 0 0 1 14.8 6.8L7.3 14.3Z" fill="#2b2b2b"/><circle cx="4.5" cy="11.5" r="4" fill="#2b2b2b"/><circle cx="4.5" cy="11.5" r="3" fill="#f2f2f2"/><path d="M6 6.5A4 4 0 0 1 9.5 10M8 4.5A4 4 0 0 1 11.5 8M10 2.5A4 4 0 0 1 13.5 6" fill="none" stroke="#f2f2f2" stroke-width="0.9"/></svg>
<svg class="a" style="left:941px;top:57px;overflow:visible" width="16" height="16" viewBox="0 0 16 16"><path d="M4 1H12A3 5.5 0 0 1 12 12H4" fill="none" stroke="#2b2b2b" stroke-width="1.3"/><ellipse cx="4" cy="6.5" rx="2.5" ry="5.5" fill="none" stroke="#2b2b2b" stroke-width="1.5"/><path d="M0 6.5H16" stroke="#2b2b2b" stroke-width="1" stroke-dasharray="2 1.2"/></svg>
<svg class="a" style="left:967px;top:56px;overflow:visible" width="16" height="16" viewBox="0 0 16 16"><path d="M0 16H13L16 13V10H3L0 13Z" fill="#2b2b2b"/><rect x="1" y="13.5" width="11.5" height="1.6" fill="#f2f2f2"/><path d="M6.5 11.5L12 0.5H16" fill="none" stroke="#2b2b2b" stroke-width="1.1"/><circle cx="7" cy="11" r="1.1" fill="#f2f2f2" stroke="#2b2b2b" stroke-width="0.8"/></svg>
<svg class="a" style="left:915px;top:81px;overflow:visible" width="16" height="16" viewBox="0 0 16 16"><path d="M0 16H13L16 13V10H3L0 13Z" fill="#2b2b2b"/><rect x="1" y="13.5" width="11.5" height="1.6" fill="#f2f2f2"/><path d="M5.5 11.5L9 0.5" fill="none" stroke="#2b2b2b" stroke-width="1.1"/><path d="M15 0.7H10.2V7.5H15M10.2 4H14" fill="none" stroke="#2b2b2b" stroke-width="1.3"/><circle cx="6" cy="11" r="1" fill="#f2f2f2"/></svg>
<svg class="a" style="left:941px;top:81px;overflow:visible" width="16" height="16" viewBox="0 0 16 16"><path d="M0 16H13L16 13V10H3L0 13Z" fill="#2b2b2b"/><rect x="1" y="13.5" width="11.5" height="1.6" fill="#f2f2f2"/><path d="M4.5 6.5H11L8 11.5Z" fill="none" stroke="#2b2b2b" stroke-width="1.1"/><path d="M8 11.5L16 0" fill="none" stroke="#2b2b2b" stroke-width="1.1"/></svg>
<svg class="a" style="left:967px;top:81px;overflow:visible" width="16" height="16" viewBox="0 0 16 16"><path d="M0 16H13L16 13V10H3L0 13Z" fill="#2b2b2b"/><rect x="1" y="13.5" width="11.5" height="1.6" fill="#f2f2f2"/><rect x="3.8" y="0.6" width="6.5" height="7.5" fill="none" stroke="#2b2b2b" stroke-width="1.2"/><path d="M7 8.1V11.5" fill="none" stroke="#2b2b2b" stroke-width="1.1"/><path d="M5.5 6L7 2.5L8.5 6M6 5H8" fill="none" stroke="#2b2b2b" stroke-width="0.8"/></svg>
<svg class="a" style="left:915px;top:106px;overflow:visible" width="16" height="16" viewBox="0 0 16 16"><path d="M0 16H13L16 13V10H3L0 13Z" fill="#2b2b2b"/><rect x="1" y="13.5" width="11.5" height="1.6" fill="#f2f2f2"/><path d="M6 11V0.6H15.5V5.5H6M9 0.6V5.5M12.2 0.6V5.5" fill="none" stroke="#2b2b2b" stroke-width="1.1"/></svg>
<svg class="a" style="left:941px;top:106px;overflow:visible" width="16" height="16" viewBox="0 0 16 16"><path d="M0 16H13L16 13V10H3L0 13Z" fill="#2b2b2b"/><rect x="1" y="13.5" width="11.5" height="1.6" fill="#f2f2f2"/><path d="M4.5 7L8.5 0.5L12.5 7Z" fill="none" stroke="#2b2b2b" stroke-width="1.1"/><path d="M4 7.5H13" fill="none" stroke="#2b2b2b" stroke-width="1"/><path d="M7.5 3.5C9 2.5 9.5 4.5 8 5.5M8 8.5V11" fill="none" stroke="#2b2b2b" stroke-width="0.8"/><path d="M13 17.7H19V12.7z" fill="#2b2b2b"/></svg>
<svg class="a" style="left:967px;top:106px;overflow:visible" width="16" height="16" viewBox="0 0 16 16"><path d="M0.5 0.5H16V4H14.5V2.5H10V14H12.5V16H3.5V14H6V2.5H1.5V4H0.5Z" fill="#2b2b2b"/></svg>
<div class="t" style="left:1015px;top:53px;font-size:12px;color:#2b2b2b;">Информация об</div>
<div class="t" style="left:1015px;top:63.5px;font-size:12px;color:#2b2b2b;">объекте</div>
<svg class="a" style="left:994px;top:56px;overflow:visible" width="16" height="16" viewBox="0 0 16 16"><path d="M0.5 0.5L6 6M6 2V6H2" fill="none" stroke="#2b2b2b" stroke-width="1.3"/><path d="M0.5 15.5H12L15 10H10M3 12L0.5 15.5M4 10H8" fill="none" stroke="#2b2b2b" stroke-width="1.2"/><text x="9" y="9" font-size="11" fill="#2b2b2b" font-family="Liberation Sans">?</text></svg>
<div class="t" style="left:1015px;top:83px;font-size:12px;color:#2b2b2b;">МЦХ модели</div>
<svg class="a" style="left:994px;top:81px;overflow:visible" width="16" height="16" viewBox="0 0 16 16"><path d="M0.7 4H7.5V9H13V16H0.7Z" fill="none" stroke="#2b2b2b" stroke-width="1.4"/><path d="M0.7 4L3.5 0.7H10.5V6L7.5 9V4Z" fill="#2b2b2b"/><path d="M10.5 6H16V13L13 16V9Z" fill="#2b2b2b"/></svg>
<div class="t" style="left:1015px;top:103px;font-size:12px;color:#2b2b2b;">График</div>
<div class="t" style="left:1015px;top:113.5px;font-size:12px;color:#2b2b2b;">кривизны</div>
<svg class="a" style="left:994px;top:106px;overflow:visible" width="16" height="16" viewBox="0 0 16 16"><path d="M0 10C3 0 6 0 9 8C11 13 13 12 16 12M2 11C4 3 7 3 10 10C12 14 13 14 15 13" fill="none" stroke="#2b2b2b" stroke-width="0.9"/><path d="M13 17H18V12z" fill="#2b2b2b"/></svg>
<div class="t" style="left:1135px;top:53px;font-size:12px;color:#2b2b2b;">Расстояние и</div>
<div class="t" style="left:1135px;top:63.5px;font-size:12px;color:#2b2b2b;">угол</div>
<svg class="a" style="left:1114px;top:56px;overflow:visible" width="16" height="16" viewBox="0 0 16 16"><path d="M0 4.5L7 1.5M6 2L8.5 11M1 15H12L15 10H4L1 15" fill="none" stroke="#2b2b2b" stroke-width="1.2"/><text x="10" y="9" font-size="11" fill="#2b2b2b" font-family="Liberation Sans">?</text><path d="M13 17H18V12z" fill="#2b2b2b"/></svg>
<div class="t" style="left:1135px;top:78px;font-size:12px;color:#2b2b2b;">Проверка</div>
<div class="t" style="left:1135px;top:88.5px;font-size:12px;color:#2b2b2b;">коллизий</div>
<svg class="a" style="left:1114px;top:81px;overflow:visible" width="16" height="16" viewBox="0 0 16 16"><path d="M4 0.7H13V9H4Z" fill="#2b2b2b"/><rect x="6.5" y="3" width="4" height="5" fill="#f2f2f2"/><path d="M0.7 8H15.3V16H0.7Z" fill="none" stroke="#2b2b2b" stroke-width="1.3"/><path d="M0.7 8H6V12.5H13V16H0.7Z" fill="#2b2b2b"/><rect x="3" y="12.5" width="10" height="1.5" fill="#f2f2f2"/></svg>
<div class="t" style="left:1135px;top:103px;font-size:12px;color:#2b2b2b;">Проверка</div>
<div class="t" style="left:1135px;top:113.5px;font-size:12px;color:#2b2b2b;">непрерывности</div>
<svg class="a" style="left:1114px;top:106px;overflow:visible" width="16" height="16" viewBox="0 0 16 16"><path d="M0 0.5C0 8 3 12 7 13.5C10 14.5 12 15 16 15" fill="none" stroke="#2b2b2b" stroke-width="1.2"/><circle cx="3.5" cy="10" r="1.2" fill="#2b2b2b"/><text x="3" y="10" font-size="10" fill="#2b2b2b" font-family="Liberation Sans">G?</text></svg>
<div class="t" style="left:1256px;top:53px;font-size:12px;color:#2b2b2b;">Создать чертеж</div>
<div class="t" style="left:1256px;top:63.5px;font-size:12px;color:#2b2b2b;">по шаблону</div>
<svg class="a" style="left:1235px;top:56px;overflow:visible" width="16" height="16" viewBox="0 0 16 16"><rect x="0.5" y="2.5" width="14" height="13" fill="none" stroke="#2b2b2b" stroke-width="1.2"/><path d="M0.5 10H8V7H14.5M8 13H14.5" fill="none" stroke="#2b2b2b" stroke-width="1.2"/><path d="M3 7H8M4 6L2.5 7L4 8" fill="none" stroke="#2b2b2b" stroke-width="0.8"/><rect x="9" y="0" width="7" height="6" fill="#2b2b2b"/><path d="M10.5 1.5H14.5M12.5 1.5V5" stroke="#f0f0f0"/></svg>
<div class="t" style="left:1256px;top:78px;font-size:12px;color:#2b2b2b;">Управление</div>
<div class="t" style="left:1256px;top:88.5px;font-size:12px;color:#2b2b2b;">связанными ч...</div>
<svg class="a" style="left:1235px;top:81px;overflow:visible" width="16" height="16" viewBox="0 0 16 16"><rect x="0.5" y="5.5" width="14" height="10" fill="none" stroke="#2b2b2b" stroke-width="1.2"/><path d="M0.5 12H14.5M8 12V15.5M3 8H8V10.5H3Z" fill="none" stroke="#2b2b2b" stroke-width="1.2"/><path d="M10 0H12.5L13 1H16V4H10Z" fill="#2b2b2b"/></svg>
<div class="t" style="left:1376px;top:53px;font-size:12px;color:#2b2b2b;">Создать</div>
<div class="t" style="left:1376px;top:63.5px;font-size:12px;color:#2b2b2b;">спецификаци...</div>
<svg class="a" style="left:1355px;top:56px;overflow:visible" width="16" height="16" viewBox="0 0 16 16"><path d="M5 1L9 0.5H12L15.5 4V11H9" fill="none" stroke="#2b2b2b" stroke-width="1.2"/><path d="M5 3L3 5L5 7M3 5H8" fill="none" stroke="#2b2b2b" stroke-width="0.8"/><path d="M0.5 6H6V16H0.5ZM0.5 8.5H6M0.5 11H6M0.5 13.5H6M3 6V16" fill="none" stroke="#2b2b2b" stroke-width="1"/></svg>
<div class="t" style="left:1376px;top:78px;font-size:12px;color:#2b2b2b;">Управление</div>
<div class="t" style="left:1376px;top:88.5px;font-size:12px;color:#2b2b2b;">связанными с...</div>
<svg class="a" style="left:1355px;top:81px;overflow:visible" width="16" height="16" viewBox="0 0 16 16"><path d="M0.5 5H9V16H0.5ZM0.5 7.5H9M0.5 10H9M0.5 12.5H9M0.5 14.5H9" fill="none" stroke="#2b2b2b" stroke-width="1"/><path d="M10 0H12.5L13 1H16V4H10Z" fill="#2b2b2b"/></svg>
<div class="t" style="left:1497px;top:53px;font-size:12px;color:#2b2b2b;">Выбрать</div>
<div class="t" style="left:1497px;top:63.5px;font-size:12px;color:#2b2b2b;">материал...</div>
<svg class="a" style="left:1476px;top:56px;overflow:visible" width="16" height="16" viewBox="0 0 16 16"><path d="M0 5L4 0.5H13V4.5L10 7.5H7.5V12H10.5V16H0V12H3.5V5Z" fill="#2b2b2b"/><rect x="4.6" y="5.5" width="1.3" height="6.5" fill="#f2f2f2"/><rect x="1" y="13.2" width="8.5" height="1.8" fill="#f2f2f2"/><path d="M9 12.5H16M11.5 10L9 12.5L11.5 15" fill="none" stroke="#2b2b2b" stroke-width="1.3"/></svg>
<div class="t" style="left:1497px;top:78px;font-size:12px;color:#b9b9b9;">Информация о</div>
<div class="t" style="left:1497px;top:88.5px;font-size:12px;color:#b9b9b9;">материале...</div>
<svg class="a" style="left:1476px;top:81px;overflow:visible" width="16" height="16" viewBox="0 0 16 16"><path d="M0 5L4 0.5H13V4.5L10 7.5H7.5V12H10.5V16H0V12H3.5V5Z" fill="#cdcdcd"/><rect x="4.6" y="5.5" width="1.3" height="6.5" fill="#f2f2f2"/><rect x="1" y="13.2" width="8.5" height="1.8" fill="#f2f2f2"/><circle cx="11.5" cy="11" r="4.5" fill="#f2f2f2" stroke="#cdcdcd" stroke-width="1.2"/><path d="M11.5 9.5V14M11.5 7.5V8.5" stroke="#cdcdcd" stroke-width="1.2"/></svg>
<div class="t" style="left:1497px;top:103px;font-size:12px;color:#b9b9b9;">Обновить</div>
<div class="t" style="left:1497px;top:113.5px;font-size:12px;color:#b9b9b9;">данные по мат...</div>
<svg class="a" style="left:1476px;top:106px;overflow:visible" width="16" height="16" viewBox="0 0 16 16"><path d="M0 5L4 0.5H13V4.5L10 7.5H7.5V12H10.5V16H0V12H3.5V5Z" fill="#cdcdcd"/><rect x="4.6" y="5.5" width="1.3" height="6.5" fill="#f2f2f2"/><rect x="1" y="13.2" width="8.5" height="1.8" fill="#f2f2f2"/><path d="M7 14C7 10 12 9 14 12M14 9V12H11M9 15.5C11 17 15 16 16 14" fill="none" stroke="#cdcdcd" stroke-width="1.1"/></svg>
<div class="t" style="left:1618px;top:53px;font-size:12px;color:#2b2b2b;">Вставить</div>
<div class="t" style="left:1618px;top:63.5px;font-size:12px;color:#2b2b2b;">элемент</div>
<svg class="a" style="left:1597px;top:56px;overflow:visible" width="16" height="16" viewBox="0 0 16 16"><circle cx="4" cy="10" r="3.5" fill="#f2f2f2" stroke="#2b2b2b" stroke-width="1.2"/><path d="M4.5 7L11 0.8C12.5 -0.2 14.5 1.5 13.5 3L8 10Z" fill="#2b2b2b"/><path d="M9 3.5L11.5 6M10.5 2L13 4.5" stroke="#f2f2f2" stroke-width="0.8"/><path d="M12 8V16M8 12H16" stroke="#2b2b2b" stroke-width="1.8"/></svg>
<div class="t" style="left:1618px;top:78px;font-size:12px;color:#2b2b2b;">Вставить</div>
<div class="t" style="left:1618px;top:88.5px;font-size:12px;color:#2b2b2b;">конструктивн...</div>
<svg class="a" style="left:1597px;top:81px;overflow:visible" width="16" height="16" viewBox="0 0 16 16"><rect x="0.6" y="0.6" width="12.8" height="12.8" fill="none" stroke="#2b2b2b" stroke-width="1.2"/><rect x="3" y="3" width="8" height="8" fill="none" stroke="#2b2b2b" stroke-width="1.1"/><path d="M0.6 3.5L3.5 0.6M0.6 7L3 4.5M0.6 10.5L3 8M9.5 0.6L13.4 4.5M6.5 0.6L9 3M3 11L5.5 13.4M0.6 13L3 11M11 6L13.4 8.5" fill="none" stroke="#2b2b2b" stroke-width="0.7"/><path d="M12 8V16M8 12H16" stroke="#2b2b2b" stroke-width="1.8"/></svg>
<div class="t" style="left:1618px;top:103px;font-size:12px;color:#2b2b2b;">Вставить</div>
<div class="t" style="left:1618px;top:113.5px;font-size:12px;color:#2b2b2b;">крепежное со...</div>
<svg class="a" style="left:1597px;top:106px;overflow:visible" width="16" height="16" viewBox="0 0 16 16"><circle cx="4" cy="10" r="3.5" fill="#f2f2f2" stroke="#2b2b2b" stroke-width="1.2"/><circle cx="9" cy="5" r="4.2" fill="#2b2b2b"/><circle cx="9.5" cy="4.5" r="1.8" fill="#f2f2f2"/><path d="M12 8V16M8 12H16" stroke="#2b2b2b" stroke-width="1.8"/></svg>
<div class="a" style="left:0px;top:145px;width:26px;height:895px;background:#c9c9c9;"></div>
<div class="a" style="left:0px;top:145px;width:26px;height:150px;background:#f0f0f0;"></div>
<div class="a" style="left:0px;top:145px;width:26px;height:25px;background:#4a4a4a;"></div>
<div class="a" style="left:26px;top:145px;width:1px;height:895px;background:#707070;"></div>
<svg class="a" style="left:7px;top:149px;overflow:visible" width="12" height="18" viewBox="0 0 12 18"><rect x="0.6" y="0.6" width="2.8" height="2.8" fill="none" stroke="#ffffff" stroke-width="1.1"/><path d="M2 3.4V15.5H8.5M2 9.5H8.5M2 3.8L2 3.8" fill="none" stroke="#ffffff" stroke-width="1.1"/><rect x="8.6" y="3.6" width="2.8" height="2.8" fill="none" stroke="#ffffff" stroke-width="1.1"/><rect x="8.6" y="8.1" width="2.8" height="2.8" fill="none" stroke="#ffffff" stroke-width="1.1"/><rect x="8.6" y="14.1" width="2.8" height="2.8" fill="none" stroke="#ffffff" stroke-width="1.1"/><path d="M2 5H8.6" stroke="#ffffff" stroke-width="1.1"/></svg>
<svg class="a" style="left:7px;top:174px;overflow:visible" width="12" height="17" viewBox="0 0 12 17"><rect x="0.6" y="0.6" width="10.8" height="15.8" fill="none" stroke="#2b2b2b" stroke-width="1.2"/><rect x="2.5" y="3" width="2.5" height="2.5" fill="none" stroke="#2b2b2b" stroke-width="0.9"/><path d="M6.5 4.3H9.5M6.5 8.5H9.5M6.5 12.5H9.5M2.3 8L3.5 9.3L5.3 7.2M2.3 12L3.5 13.3L5.3 11.2" fill="none" stroke="#2b2b2b" stroke-width="1"/></svg>
<svg class="a" style="left:6px;top:198px;overflow:visible" width="16" height="18" viewBox="0 0 16 18"><text x="0" y="15" font-family="Liberation Serif" font-style="italic" font-size="16" fill="#2b2b2b">f</text><text x="7" y="16" font-family="Liberation Sans" font-size="10" fill="#2b2b2b">x</text></svg>
<svg class="a" style="left:5px;top:223px;overflow:visible" width="16" height="17" viewBox="0 0 16 17"><rect x="0.5" y="0.5" width="15" height="3.6" rx="1.5" fill="#2b2b2b"/><rect x="0.5" y="6.5" width="15" height="3.6" rx="1.5" fill="#2b2b2b"/><rect x="0.5" y="12.5" width="15" height="3.6" rx="1.5" fill="#2b2b2b"/></svg>
<svg class="a" style="left:6px;top:252px;overflow:visible" width="14" height="14" viewBox="0 0 14 14"><rect x="5" y="0" width="4" height="4" fill="#2b2b2b"/><path d="M7 4V7M2 12V7H12V12M7 7V12" fill="none" stroke="#2b2b2b" stroke-width="1.2"/><rect x="0" y="10" width="3.5" height="3.5" fill="#2b2b2b"/><rect x="5.2" y="10" width="3.5" height="3.5" fill="#2b2b2b"/><rect x="10.5" y="10" width="3.5" height="3.5" fill="#2b2b2b"/></svg>
<svg class="a" style="left:5px;top:274px;overflow:visible" width="16" height="16" viewBox="0 0 16 16"><circle cx="8" cy="8" r="7.3" fill="none" stroke="#2b2b2b" stroke-width="1.3"/><path d="M5.5 1.5V10.5H14.5M3.5 3.5V12.5H13" fill="none" stroke="#2b2b2b" stroke-width="1.2"/></svg>
<div class="a" style="left:27px;top:145px;width:310px;height:895px;background:#f2f2f2;"></div>
<div class="a" style="left:337px;top:145px;width:1px;height:895px;background:#6e6e6e;"></div>
<div class="a" style="left:27px;top:145px;width:310px;height:16px;background:#c9c9c9;"></div>
<div class="t" style="left:30px;top:148px;font-size:12px;color:#333;">Дерево</div>
<svg class="a" style="left:321px;top:146px;overflow:visible" width="14" height="14" viewBox="0 0 14 14"><circle cx="7" cy="7" r="4" fill="none" stroke="#2b2b2b" stroke-width="2"/><rect x="5.8" y="0" width="2.4" height="3" fill="#2b2b2b" transform="rotate(0 7 7)"/><rect x="5.8" y="0" width="2.4" height="3" fill="#2b2b2b" transform="rotate(45 7 7)"/><rect x="5.8" y="0" width="2.4" height="3" fill="#2b2b2b" transform="rotate(90 7 7)"/><rect x="5.8" y="0" width="2.4" height="3" fill="#2b2b2b" transform="rotate(135 7 7)"/><rect x="5.8" y="0" width="2.4" height="3" fill="#2b2b2b" transform="rotate(180 7 7)"/><rect x="5.8" y="0" width="2.4" height="3" fill="#2b2b2b" transform="rotate(225 7 7)"/><rect x="5.8" y="0" width="2.4" height="3" fill="#2b2b2b" transform="rotate(270 7 7)"/><rect x="5.8" y="0" width="2.4" height="3" fill="#2b2b2b" transform="rotate(315 7 7)"/></svg>
<div class="a" style="left:27px;top:161px;width:310px;height:26px;background:#f2f2f2;"></div>
<div class="a" style="left:27px;top:161px;width:26px;height:26px;background:#4a4a4a;"></div>
<svg class="a" style="left:32px;top:166px;overflow:visible" width="16" height="16" viewBox="0 0 16 16"><rect x="0.6" y="0.6" width="2.6" height="2.6" fill="none" stroke="#ffffff" stroke-width="1"/><path d="M1.9 3.2V15H5M1.9 8.5H5" fill="none" stroke="#ffffff" stroke-width="1.1"/><text x="5" y="6" font-size="5.5" font-family="Liberation Sans" fill="#ffffff">1</text><text x="8.5" y="9.5" font-size="5.5" font-family="Liberation Sans" fill="#ffffff">11</text><text x="8.5" y="15" font-size="5.5" font-family="Liberation Sans" fill="#ffffff">12</text><text x="5" y="15.5" font-size="5.5" font-family="Liberation Sans" fill="#ffffff">2</text></svg>
<svg class="a" style="left:58px;top:165px;overflow:visible" width="13" height="17" viewBox="0 0 13 17"><rect x="0.6" y="0.6" width="2.6" height="2.6" fill="none" stroke="#2b2b2b" stroke-width="1"/><path d="M1.9 3.2V15.5H5M1.9 9H5M5 5V12H8" fill="none" stroke="#2b2b2b" stroke-width="1.1"/><rect x="4.6" y="13.6" width="2.6" height="2.6" fill="none" stroke="#2b2b2b" stroke-width="1"/><rect x="4.6" y="7.6" width="2.6" height="2.6" fill="none" stroke="#2b2b2b" stroke-width="1"/><rect x="9.6" y="4.6" width="2.6" height="2.6" fill="none" stroke="#2b2b2b" stroke-width="1"/><rect x="9.6" y="10.6" width="2.6" height="2.6" fill="none" stroke="#2b2b2b" stroke-width="1"/></svg>
<svg class="a" style="left:84px;top:166px;overflow:visible" width="16" height="16" viewBox="0 0 16 16"><path d="M6 3L9 0.6H12L15.4 4V12H10" fill="none" stroke="#2b2b2b" stroke-width="1.1"/><circle cx="10" cy="7" r="2.3" fill="none" stroke="#2b2b2b" stroke-width="1.1"/><path d="M3 7L6 4.6H9V12H6" fill="none" stroke="#2b2b2b" stroke-width="1.1"/><circle cx="6" cy="9.5" r="2.3" fill="none" stroke="#2b2b2b" stroke-width="1.1"/><rect x="0.6" y="9.6" width="6" height="6" fill="none" stroke="#2b2b2b" stroke-width="1.1"/><circle cx="3.5" cy="12.5" r="1.2" fill="none" stroke="#2b2b2b" stroke-width="1"/></svg>
<svg class="a" style="left:110px;top:166px;overflow:visible" width="16" height="15" viewBox="0 0 16 15"><rect x="0.6" y="0.6" width="14.8" height="13.8" fill="none" stroke="#2b2b2b" stroke-width="1.1" stroke-dasharray="1.6 1.6"/></svg>
<div class="a" style="left:27px;top:187px;width:310px;height:1px;background:#1a1a1a;"></div>
<div class="a" style="left:27px;top:188px;width:310px;height:25px;background:#ffffff;"></div>
<div class="a" style="left:27px;top:188px;width:26px;height:25px;background:#f3f3f3;"></div>
<svg class="a" style="left:32px;top:192px;overflow:visible" width="16" height="16" viewBox="0 0 16 16"><path d="M0 0.5H16L10.5 7V15.5H6.5L5.5 7Z" fill="#2b2b2b"/></svg>
<svg class="a" style="left:59px;top:194px;overflow:visible" width="13" height="13" viewBox="0 0 13 13"><circle cx="7.8" cy="5" r="3.9" fill="none" stroke="#a8a8a8" stroke-width="1.3"/><path d="M5 8L1 12" stroke="#a8a8a8" stroke-width="1.7"/></svg>
<div class="t" style="left:77px;top:193px;font-size:12.4px;color:#a0a0a0;">Поиск (Ctrl+/)</div>
<div class="a" style="left:27px;top:213px;width:310px;height:1px;background:#4a4a4a;"></div>
<div class="a" style="left:27px;top:214px;width:52px;height:27px;background:#e4e4e4;"></div>
<div class="a" style="left:27px;top:241px;width:52px;height:1px;background:#b4b4b4;"></div>
<div class="a" style="left:79px;top:214px;width:258px;height:1px;background:#f2f2f2;"></div>
<div class="a" style="left:79px;top:215px;width:258px;height:1px;background:#55b5d0;"></div>
<div class="a" style="left:79px;top:241px;width:258px;height:1px;background:#2bb8dc;"></div>
<svg class="a" style="left:93px;top:227px;overflow:visible" width="6" height="6" viewBox="0 0 6 6"><path d="M0 0L5 2.5L0 5Z" fill="#2b2b2b"/></svg>
<svg class="a" style="left:103px;top:219px;overflow:visible" width="17" height="18" viewBox="0 0 17 18"><path d="M0.6 17V4.5L4.3 0.8V2.8" fill="none" stroke="#2b2b2b" stroke-width="1.2"/><path d="M0.6 16.8H11.5L15.5 12.5" fill="none" stroke="#2b2b2b" stroke-width="1.2"/><path d="M4 3H11L14.3 6.3V12H10.5V14.6H2.7V6Z" fill="#2b2b2b"/><rect x="3.3" y="6.2" width="7.2" height="8" fill="#f2f2f2"/><path d="M3.3 6.2H10.5V14.3H3.3Z" fill="none" stroke="#2b2b2b" stroke-width="1"/><circle cx="6.8" cy="10.8" r="2.2" fill="none" stroke="#2b2b2b" stroke-width="1.3"/></svg>
<div class="a" style="left:122px;top:220px;width:214px;height:18px;overflow:hidden"><div class="t" style="left:0;top:2px;font-size:11.7px;color:#2b2b2b">(−)ВП1.15.00.000 Вышка пожарная 15 м</div></div>
<div class="a" style="left:27px;top:813px;width:310px;height:1px;background:#e0e0e0;"></div>
<div class="a" style="left:27px;top:820px;width:310px;height:1px;background:#9a9a9a;"></div>
<div class="a" style="left:27px;top:821px;width:310px;height:24px;background:#f2f2f2;"></div>
<div class="a" style="left:27px;top:821px;width:26px;height:24px;background:#4a4a4a;"></div>
<div class="a" style="left:27px;top:845px;width:310px;height:1px;background:#9a9a9a;"></div>
<div class="a" style="left:27px;top:846px;width:310px;height:1px;background:#d0d0d0;"></div>
<svg class="a" style="left:33px;top:825px;overflow:visible" width="12" height="16" viewBox="0 0 12 16"><rect x="0.6" y="0.6" width="2.4" height="2.4" fill="none" stroke="#ffffff" stroke-width="1"/><path d="M1.8 3V14H8.5M1.8 9H8.5M1.8 4.5H8.5" fill="none" stroke="#ffffff" stroke-width="1"/><rect x="8.6" y="3.3" width="2.4" height="2.4" fill="none" stroke="#ffffff" stroke-width="1"/><rect x="8.6" y="7.8" width="2.4" height="2.4" fill="none" stroke="#ffffff" stroke-width="1"/><rect x="8.6" y="12.8" width="2.4" height="2.4" fill="none" stroke="#ffffff" stroke-width="1"/></svg>
<svg class="a" style="left:59px;top:825px;overflow:visible" width="13" height="16" viewBox="0 0 13 16"><rect x="0.6" y="0.6" width="11.2" height="14.8" fill="none" stroke="#2b2b2b" stroke-width="1.1"/><rect x="2.5" y="2.5" width="2.5" height="2.5" fill="none" stroke="#2b2b2b" stroke-width="0.9"/><path d="M6.5 3.8H9.5M6.5 7.5H9.5M6.5 11.5H9.5M2.3 7L3.5 8.3L5.3 6.2M2.3 11L3.5 12.3L5.3 10.2" fill="none" stroke="#2b2b2b" stroke-width="0.9"/></svg>
<svg class="a" style="left:85px;top:824px;overflow:visible" width="16" height="18" viewBox="0 0 16 18"><text x="0" y="15" font-family="Liberation Serif" font-style="italic" font-size="16" fill="#2b2b2b">f</text><text x="7" y="16" font-family="Liberation Sans" font-size="10" fill="#2b2b2b">x</text></svg>
<div class="a" style="left:338px;top:145px;width:1582px;height:895px;background:#d9d9d9;"></div>
<div class="a" style="left:606px;top:145px;width:588px;height:26px;background:#6e6e6e;"></div>
<div class="a" style="left:607px;top:145px;width:586px;height:25px;background:#f0f0f0;"></div>
<div class="a" style="left:607px;top:145px;width:15px;height:25px;background:#e6e6e6;"></div>
<div class="a" style="left:622px;top:145px;width:1px;height:25px;background:#6e6e6e;"></div>
<div class="a" style="left:678px;top:145px;width:1px;height:25px;background:#6e6e6e;"></div>
<div class="a" style="left:803px;top:145px;width:1px;height:25px;background:#6e6e6e;"></div>
<div class="a" style="left:879px;top:145px;width:1px;height:25px;background:#6e6e6e;"></div>
<div class="a" style="left:977px;top:145px;width:1px;height:25px;background:#6e6e6e;"></div>
<div class="a" style="left:1087px;top:145px;width:1px;height:25px;background:#6e6e6e;"></div>
<div class="a" style="left:1138px;top:145px;width:1px;height:25px;background:#6e6e6e;"></div>
<div class="a" style="left:804px;top:145px;width:26px;height:25px;background:#4a4a4a;"></div>
<div class="a" style="left:978px;top:145px;width:27px;height:25px;background:#4a4a4a;"></div>
<div class="a" style="left:1033px;top:145px;width:27px;height:25px;background:#4a4a4a;"></div>
<div class="a" style="left:1088px;top:145px;width:50px;height:25px;background:#4a4a4a;"></div>
<svg class="a" style="left:609px;top:149px;overflow:visible" width="12" height="6" viewBox="0 0 12 6"><rect x="0" y="0" width="1.8" height="1.8" fill="#2b2b2b"/><rect x="0" y="3" width="1.8" height="1.8" fill="#2b2b2b"/><rect x="3" y="0" width="1.8" height="1.8" fill="#2b2b2b"/><rect x="3" y="3" width="1.8" height="1.8" fill="#2b2b2b"/><rect x="6" y="0" width="1.8" height="1.8" fill="#2b2b2b"/><rect x="6" y="3" width="1.8" height="1.8" fill="#2b2b2b"/><rect x="9" y="0" width="1.8" height="1.8" fill="#2b2b2b"/><rect x="9" y="3" width="1.8" height="1.8" fill="#2b2b2b"/></svg>
<svg class="a" style="left:629px;top:149px;overflow:visible" width="16" height="16" viewBox="0 0 16 16"><path d="M1.5 1.5H7.5V8.5H14.5V14.5H1.5Z" fill="none" stroke="#2b2b2b" stroke-width="1.2"/><circle cx="1.5" cy="1.5" r="1.3" fill="#f0f0f0" stroke="#2b2b2b" stroke-width="0.9"/><circle cx="7.5" cy="1.5" r="1.3" fill="#f0f0f0" stroke="#2b2b2b" stroke-width="0.9"/><circle cx="7.5" cy="8.5" r="1.3" fill="#f0f0f0" stroke="#2b2b2b" stroke-width="0.9"/><circle cx="14.5" cy="8.5" r="1.3" fill="#f0f0f0" stroke="#2b2b2b" stroke-width="0.9"/><circle cx="14.5" cy="14.5" r="1.3" fill="#f0f0f0" stroke="#2b2b2b" stroke-width="0.9"/><circle cx="1.5" cy="14.5" r="1.3" fill="#f0f0f0" stroke="#2b2b2b" stroke-width="0.9"/></svg>
<svg class="a" style="left:656px;top:149px;overflow:visible" width="17" height="16" viewBox="0 0 17 16"><path d="M0.5 4.5L4 2V14L0.5 16Z" fill="#2b2b2b"/><path d="M4 2V14H14V10.5H6" fill="none" stroke="#2b2b2b" stroke-width="1.2"/><path d="M0.5 16L4 14H14L12 16Z" fill="#2b2b2b"/><path d="M6 8L9 10.5H6Z" fill="#2b2b2b"/><circle cx="13" cy="4" r="3.2" fill="none" stroke="#2b2b2b" stroke-width="1.3"/><rect x="12" y="3" width="2" height="2" fill="#2b2b2b"/></svg>
<svg class="a" style="left:685px;top:150px;overflow:visible" width="16" height="16" viewBox="0 0 16 16"><circle cx="5.5" cy="5.5" r="4.8" fill="none" stroke="#2b2b2b" stroke-width="1.2"/><path d="M9 9L13.5 13.5" stroke="#2b2b2b" stroke-width="2"/><path d="M6.5 0.5H15V8H10" fill="none" stroke="#2b2b2b" stroke-width="0.9" stroke-dasharray="1 1"/></svg>
<svg class="a" style="left:712px;top:154px;overflow:visible" width="10" height="6" viewBox="0 0 10 6"><path d="M0 0H10L5 5.5Z" fill="#2b2b2b"/></svg>
<svg class="a" style="left:733px;top:149px;overflow:visible" width="17" height="16" viewBox="0 0 17 16"><path d="M0.5 15.5L4 10H16.5L13 15.5Z" fill="#2b2b2b"/><path d="M6.5 12V5H4L9 0.5L14 5H11.5V12Z" fill="#f0f0f0" stroke="#2b2b2b" stroke-width="1.2"/></svg>
<svg class="a" style="left:760px;top:148px;overflow:visible" width="18" height="18" viewBox="0 0 18 18"><path d="M7 1V12H16M7 12L1 17" fill="none" stroke="#2b2b2b" stroke-width="1"/><path d="M5.5 3L7 0.5L8.5 3ZM14 10.5L16.5 12L14 13.5ZM2.5 14.5L0.5 17.5L3.8 16.2Z" fill="#2b2b2b"/><rect x="5.5" y="9.5" width="4" height="4" fill="#f0f0f0" stroke="#2b2b2b" stroke-width="1"/></svg>
<svg class="a" style="left:786px;top:154px;overflow:visible" width="10" height="6" viewBox="0 0 10 6"><path d="M0 0H10L5 5.5Z" fill="#2b2b2b"/></svg>
<svg class="a" style="left:808px;top:149px;overflow:visible" width="18" height="17" viewBox="0 0 18 17"><path d="M9 0.5L17 4.5V13L9 16.5L1 13V4.5Z" fill="#ffffff"/><path d="M1 4.5L9 8.5L17 4.5M9 8.5V16.5" fill="none" stroke="#4a4a4a" stroke-width="1"/></svg>
<svg class="a" style="left:836px;top:149px;overflow:visible" width="17" height="17" viewBox="0 0 17 17"><path d="M8.5 0.5L16 4.5V12.5L8.5 16.5L1 12.5V4.5Z" fill="none" stroke="#2b2b2b" stroke-width="1.1"/><path d="M1 4.5L8.5 8.5L16 4.5M8.5 8.5V16.5M1 12.5L8.5 8.5M8.5 0.5V8.5" fill="none" stroke="#2b2b2b" stroke-width="0.8"/></svg>
<svg class="a" style="left:863px;top:154px;overflow:visible" width="10" height="6" viewBox="0 0 10 6"><path d="M0 0H10L5 5.5Z" fill="#2b2b2b"/></svg>
<svg class="a" style="left:886px;top:149px;overflow:visible" width="17" height="16" viewBox="0 0 17 16"><path d="M1 8C4 3 13 3 16 8C13 13 4 13 1 8Z" fill="none" stroke="#2b2b2b" stroke-width="1.5"/><circle cx="8.5" cy="8" r="2.5" fill="#2b2b2b"/><path d="M2 1L15 15" stroke="#2b2b2b" stroke-width="1.2"/></svg>
<svg class="a" style="left:913px;top:154px;overflow:visible" width="10" height="6" viewBox="0 0 10 6"><path d="M0 0H10L5 5.5Z" fill="#2b2b2b"/></svg>
<svg class="a" style="left:933px;top:149px;overflow:visible" width="18" height="16" viewBox="0 0 18 16"><path d="M1 1L3 2.5H16V13H1Z" fill="#2b2b2b"/><path d="M3 7.5C5 4.5 12 4.5 14 7.5C12 10.5 5 10.5 3 7.5Z" fill="#f0f0f0"/><circle cx="8.5" cy="7.5" r="2" fill="#2b2b2b"/><circle cx="8.5" cy="7.5" r="0.8" fill="#f0f0f0"/><path d="M15 13L17 15" stroke="#2b2b2b" stroke-width="1"/></svg>
<svg class="a" style="left:961px;top:154px;overflow:visible" width="10" height="6" viewBox="0 0 10 6"><path d="M0 0H10L5 5.5Z" fill="#2b2b2b"/></svg>
<svg class="a" style="left:984px;top:149px;overflow:visible" width="16" height="16" viewBox="0 0 16 16"><path d="M3 13L13 3" stroke="#ffffff" stroke-width="1.1"/><circle cx="2.5" cy="13.5" r="1.8" fill="none" stroke="#ffffff" stroke-width="1"/><circle cx="13.5" cy="2.5" r="1.8" fill="none" stroke="#ffffff" stroke-width="1"/><path d="M2.5 1.5L4.5 3.5L2.5 5.5L0.5 3.5ZM13.5 10.5L15.5 12.5L13.5 14.5L11.5 12.5Z" fill="none" stroke="#ffffff" stroke-width="1"/></svg>
<svg class="a" style="left:1011px;top:149px;overflow:visible" width="16" height="17" viewBox="0 0 16 17"><path d="M1 6.5H3L6 3.5H15V14.5L13 16.5H1Z" fill="none" stroke="#2b2b2b" stroke-width="1.2"/><path d="M6 0V3.5M9 0V3.5M12 0V3.5M15 0V3.5M6.5 1.5H15" stroke="#2b2b2b" stroke-width="1"/><path d="M2.5 9V15M1 10.5H4M1 13.5H4" stroke="#2b2b2b" stroke-width="0.8"/><path d="M13 16.5V6.5H6" fill="none" stroke="#2b2b2b" stroke-width="0.8"/></svg>
<svg class="a" style="left:1038px;top:149px;overflow:visible" width="17" height="17" viewBox="0 0 17 17"><path d="M1 2.5L4 0.5H11L13 3V8H16V15L14 16.5H1Z" fill="#ffffff"/><path d="M2 2.5L10 14M2 14L6 3" stroke="#4a4a4a" stroke-width="1"/><path d="M11 8L13 6V15L11 16.5Z" fill="#9a9a9a"/></svg>
<svg class="a" style="left:1065px;top:149px;overflow:visible" width="17" height="17" viewBox="0 0 17 17"><path d="M1 16.5V4L5 2L16 13V16.5Z" fill="#2b2b2b"/><path d="M4 6V14H12" fill="none" stroke="#f0f0f0" stroke-width="1.2"/><path d="M5 0.5L16.5 12" stroke="#2b2b2b" stroke-width="3" stroke-dasharray="1.5 1"/></svg>
<svg class="a" style="left:1093px;top:149px;overflow:visible" width="17" height="17" viewBox="0 0 17 17"><path d="M0.5 0.5H16.5L10.5 8V16.5H6.5V8Z" fill="#ffffff"/></svg>
<svg class="a" style="left:1121px;top:154px;overflow:visible" width="10" height="6" viewBox="0 0 10 6"><path d="M0 0H10L5 5.5Z" fill="#ffffff"/></svg>
<svg class="a" style="left:1143px;top:148px;overflow:visible" width="18" height="18" viewBox="0 0 18 18"><path d="M1.5 1H17" stroke="#2b2b2b" stroke-width="1.4"/><path d="M11 1V17M16 1V17M11 4L16 7M11 7L16 4M11 10L16 13M11 13L16 10" stroke="#2b2b2b" stroke-width="0.9"/><path d="M4 1V10M2.5 8L4 10.5L5.5 8" fill="none" stroke="#2b2b2b" stroke-width="1"/><rect x="0.5" y="12" width="8" height="5" fill="none" stroke="#2b2b2b" stroke-width="1.1"/><path d="M4.5 12V17M0.5 14.5H8.5" stroke="#2b2b2b" stroke-width="0.9"/></svg>
<svg class="a" style="left:1172px;top:150px;overflow:visible" width="17" height="16" viewBox="0 0 17 16"><path d="M1 15L3 11L10 4L12 6L5 13Z" fill="none" stroke="#c0c0c0" stroke-width="1.2"/><path d="M10 4L13 1.5C14.5 0.5 16 2 15 3.5L12 6Z" fill="#c8c8c8"/></svg>
<svg class="a" style="left:400px;top:895px;overflow:visible" width="85" height="80" viewBox="0 0 85 80"><defs><linearGradient id="zax" x1="0" x2="1"><stop offset="0" stop-color="#4a8a9a"/><stop offset="0.5" stop-color="#d8f0ff"/><stop offset="1" stop-color="#4a8a9a"/></linearGradient><linearGradient id="yax" x1="0" x2="0" y1="0" y2="1"><stop offset="0" stop-color="#5aa05a"/><stop offset="0.5" stop-color="#e0ffe0"/><stop offset="1" stop-color="#5aa05a"/></linearGradient></defs>
<rect x="9.2" y="31" width="4.2" height="35" fill="url(#zax)"/>
<path d="M11.3 14L12 18L15.5 32H7L10.5 18Z" fill="#70a8e8"/><path d="M11.3 14V30" stroke="#c8f0ff" stroke-width="0.8"/>
<text x="7.5" y="12" font-family="Liberation Serif" font-size="10.5" fill="#5a90e0">Z</text>
<rect x="14" y="68.5" width="36" height="4.2" fill="url(#yax)"/>
<path d="M50.5 66L68 70.6L50.5 75Z" fill="#70c870"/><path d="M52 70.6H66" stroke="#d8ffd8" stroke-width="0.8"/>
<text x="70" y="75" font-family="Liberation Serif" font-size="10.5" fill="#40b040">Y</text>
<circle cx="11.2" cy="70.6" r="6" fill="#f0e080" stroke="#8a8a40" stroke-width="0.7"/>
<circle cx="11.2" cy="70.6" r="4" fill="#a05a30"/>
<path d="M8.5 68L14 73.5M14 68L8.5 73.5" stroke="#ff2020" stroke-width="1.1"/></svg>
<div class="a" style="left:0;top:1040px;width:1920px;height:40px;background:linear-gradient(90deg,#1f3239 0%,#223a41 20%,#233b43 45%,#21353f 62%,#1d2c43 82%,#1b2747 100%)"></div>
<div class="a" style="left:149px;top:1040px;width:48px;height:40px;background:#4a5b62;"></div>
<div class="a" style="left:104px;top:1078px;width:40px;height:2px;background:#76b9ed;"></div>
<div class="a" style="left:149px;top:1078px;width:48px;height:2px;background:#76b9ed;"></div>
<div class="a" style="left:202px;top:1078px;width:40px;height:2px;background:#76b9ed;"></div>
<div class="a" style="left:251px;top:1078px;width:40px;height:2px;background:#76b9ed;"></div>
<svg class="a" style="left:16px;top:1052px;overflow:visible" width="17" height="17" viewBox="0 0 17 17"><path d="M0 2.3L6.8 1.4V7.9H0ZM7.6 1.3L16.5 0V7.9H7.6ZM0 8.7H6.8V15.3L0 14.3ZM7.6 8.7H16.5V16.5L7.6 15.3Z" fill="#ffffff"/></svg>
<svg class="a" style="left:64px;top:1050px;overflow:visible" width="22" height="19" viewBox="0 0 22 19"><path d="M0 1.5Q0 0 1.5 0H7L9 2H20.5Q21.5 2 21.5 3V17.5Q21.5 18.5 20.5 18.5H1Q0 18.5 0 17.5Z" fill="#f7c94a"/><path d="M0 4H21.5V17.5Q21.5 18.5 20.5 18.5H1Q0 18.5 0 17.5Z" fill="#fbd66a"/><path d="M5 18.5V12.5Q5 11 6.5 11H15Q16.5 11 16.5 12.5V18.5H13.5V14H8V18.5Z" fill="#3a8ee0"/></svg>
<svg class="a" style="left:112px;top:1048px;overflow:visible" width="24" height="24" viewBox="0 0 24 24"><defs><linearGradient id="edg" x1="0" y1="0" x2="1" y2="1"><stop offset="0" stop-color="#35c1f1"/><stop offset="0.6" stop-color="#1f7fd8"/><stop offset="1" stop-color="#114a9c"/></linearGradient><linearGradient id="edg2" x1="0" y1="0" x2="1" y2="0"><stop offset="0" stop-color="#1fa0e0"/><stop offset="1" stop-color="#6fd36a"/></linearGradient></defs><circle cx="12" cy="12" r="12" fill="url(#edg)"/><path d="M3 9C5 2 18 0 22.5 9C24 13 20 16 15 14C11 12.5 13 9 16 10C14 7 7 6 5 12Z" fill="url(#edg2)"/><path d="M8 13C8 19 15 23 21 19C17 22 10 21 8 16Z" fill="#0e3f8a"/></svg>
<svg class="a" style="left:161px;top:1048px;overflow:visible" width="25" height="24" viewBox="0 0 25 24"><rect x="0.5" y="0.5" width="23" height="23" fill="#252525" stroke="#11b5ef" stroke-width="1.2"/><circle cx="12" cy="12.5" r="8.5" fill="none" stroke="#11b5ef" stroke-width="1.3"/><path d="M9 6.5V18.5M9 13L16 5.5M11.5 10.5L17.5 17.5" stroke="#11b5ef" stroke-width="1.4" fill="none"/></svg>
<svg class="a" style="left:210px;top:1048px;overflow:visible" width="24" height="24" viewBox="0 0 24 24"><circle cx="12" cy="12" r="12" fill="#2f4a8c"/><path d="M6 5.5L12 12.5L18 5.5M12 12.5V19.5" fill="none" stroke="#ffffff" stroke-width="3.4"/></svg>
<svg class="a" style="left:258px;top:1050px;overflow:visible" width="24" height="19" viewBox="0 0 24 19"><path d="M1 3L11 6L22 1L23 13L12 18L2 14Z" fill="#e8a040"/><path d="M2.5 4L11 7V16.5L3 13Z" fill="#e6f0f8"/><path d="M12 7L21.5 2.5L22 12.5L12 16.5Z" fill="#dce8f4"/><path d="M4 6L10 8M4 9L10 11M13 9L20 6M13 12L20 9" stroke="#7ab0d8" stroke-width="0.8"/><path d="M0 2L1 3L2 14" stroke="#e05050" stroke-width="1"/></svg>
<div class="t" style="left:1873.5px;top:1045.5px;font-size:11.7px;letter-spacing:-0.35px;color:#fff">14:58</div>
<div class="t" style="left:1860px;top:1063px;font-size:11.7px;letter-spacing:-0.4px;color:#fff">24.09.2024</div>
<svg class="a" style="left:1000px;top:230px" width="150" height="770" viewBox="1000 230 150 770"><defs>
<linearGradient id="col" x1="0" x2="1" y1="0" y2="0">
<stop offset="0" stop-color="#1a0000"/><stop offset="0.08" stop-color="#3a0000"/><stop offset="0.22" stop-color="#650000"/><stop offset="0.45" stop-color="#8a0000"/><stop offset="0.6" stop-color="#b80000"/><stop offset="0.7" stop-color="#ff0808"/><stop offset="0.8" stop-color="#c80000"/><stop offset="0.92" stop-color="#a00000"/><stop offset="1" stop-color="#200000"/></linearGradient>
<linearGradient id="pipe" x1="0" x2="1" y1="0" y2="0">
<stop offset="0" stop-color="#200000"/><stop offset="0.2" stop-color="#6a0000"/><stop offset="0.45" stop-color="#c00000"/><stop offset="0.6" stop-color="#ff0a0a"/><stop offset="0.75" stop-color="#e00000"/><stop offset="0.9" stop-color="#900000"/><stop offset="1" stop-color="#200000"/></linearGradient>
<linearGradient id="mast" x1="0" x2="1" y1="0" y2="0">
<stop offset="0" stop-color="#2a2000"/><stop offset="0.25" stop-color="#e8b400"/><stop offset="0.6" stop-color="#ffe000"/><stop offset="1" stop-color="#d8a800"/></linearGradient>
<linearGradient id="base" x1="0" x2="1" y1="0" y2="0">
<stop offset="0" stop-color="#7a0000"/><stop offset="0.2" stop-color="#ff1010"/><stop offset="0.6" stop-color="#a00000"/><stop offset="0.8" stop-color="#500000"/><stop offset="1" stop-color="#9a0000"/></linearGradient>
</defs>
<rect x="1095" y="240" width="5.5" height="182" fill="url(#mast)" stroke="#1a0000" stroke-width="0.6"/>
<path d="M1030 243.5H1097V248.5H1030Z" fill="#f2a200" stroke="#1a0000" stroke-width="0.7"/>
<path d="M1044 246L1048 246L1097 273V279L1093 278Z" fill="#f2a800" stroke="#1a0000" stroke-width="0.7"/>
<rect x="1043" y="245" width="10" height="3" fill="#e09800" stroke="#1a0000" stroke-width="0.5"/>
<line x1="1030.5" y1="248" x2="1030.5" y2="257" stroke="#222" stroke-width="1"/>
<circle cx="1030.5" cy="260.5" r="2.6" fill="#777" stroke="#333" stroke-width="0.8"/>
<rect x="1094" y="271" width="3" height="10" fill="#e0b000" stroke="#1a0000" stroke-width="0.5"/>
<path d="M1088 379H1107L1096 390V396H1088Z" fill="#ffc000" stroke="#1a0000" stroke-width="0.7"/>
<path d="M1088 423H1107L1096 434V440H1088Z" fill="#ffc000" stroke="#1a0000" stroke-width="0.7"/>
<line x1="1074" y1="299.5" x2="1094" y2="299.5" stroke="#d08000" stroke-width="1.2"/>
<line x1="1072" y1="299.5" x2="1077" y2="299.5" stroke="#333" stroke-width="1.2"/>
<line x1="1060.5" y1="357" x2="1060.5" y2="465" stroke="#202020" stroke-width="0.9"/>
<line x1="1092" y1="357" x2="1092" y2="465" stroke="#808080" stroke-width="1"/>
<line x1="1060" y1="465" x2="1064" y2="465" stroke="#a00000" stroke-width="1.6"/>
<line x1="1089" y1="465" x2="1094" y2="465" stroke="#a00000" stroke-width="1.6"/>
<line x1="1060.5" y1="583" x2="1060.5" y2="692" stroke="#202020" stroke-width="0.9"/>
<line x1="1092" y1="583" x2="1092" y2="692" stroke="#808080" stroke-width="1"/>
<line x1="1060" y1="692" x2="1064" y2="692" stroke="#a00000" stroke-width="1.6"/>
<line x1="1089" y1="692" x2="1094" y2="692" stroke="#a00000" stroke-width="1.6"/>
<line x1="1060.5" y1="808" x2="1060.5" y2="863" stroke="#202020" stroke-width="0.9"/>
<line x1="1092" y1="808" x2="1092" y2="863" stroke="#808080" stroke-width="1"/>
<line x1="1060" y1="863" x2="1064" y2="863" stroke="#a00000" stroke-width="1.6"/>
<line x1="1089" y1="863" x2="1094" y2="863" stroke="#a00000" stroke-width="1.6"/>
<rect x="1049.5" y="296" width="7" height="642" fill="url(#pipe)" stroke="#1a0000" stroke-width="0.6"/>
<path d="M1049.5 937 Q1049.5 944 1042 944 H1037 V951 H1043 Q1057 951 1057 937Z" fill="url(#pipe)" stroke="#1a0000" stroke-width="0.6"/>
<rect x="1034" y="939" width="3" height="15" fill="#c00000" stroke="#1a0000" stroke-width="0.6"/>
<rect x="1042" y="943.5" width="1.5" height="8" fill="#600000"/>
<rect x="1046.5" y="375.0" width="5" height="2.5" fill="#5a0000" stroke="#1a0000" stroke-width="0.5"/>
<rect x="1046.5" y="397.5" width="5" height="2.5" fill="#5a0000" stroke="#1a0000" stroke-width="0.5"/>
<rect x="1046.5" y="420.0" width="5" height="2.5" fill="#5a0000" stroke="#1a0000" stroke-width="0.5"/>
<rect x="1046.5" y="442.5" width="5" height="2.5" fill="#5a0000" stroke="#1a0000" stroke-width="0.5"/>
<rect x="1046.5" y="465.0" width="5" height="2.5" fill="#5a0000" stroke="#1a0000" stroke-width="0.5"/>
<rect x="1046.5" y="487.5" width="5" height="2.5" fill="#5a0000" stroke="#1a0000" stroke-width="0.5"/>
<rect x="1046.5" y="510.0" width="5" height="2.5" fill="#5a0000" stroke="#1a0000" stroke-width="0.5"/>
<rect x="1046.5" y="532.5" width="5" height="2.5" fill="#5a0000" stroke="#1a0000" stroke-width="0.5"/>
<rect x="1046.5" y="555.0" width="5" height="2.5" fill="#5a0000" stroke="#1a0000" stroke-width="0.5"/>
<rect x="1046.5" y="577.5" width="5" height="2.5" fill="#5a0000" stroke="#1a0000" stroke-width="0.5"/>
<rect x="1046.5" y="600.0" width="5" height="2.5" fill="#5a0000" stroke="#1a0000" stroke-width="0.5"/>
<rect x="1046.5" y="622.5" width="5" height="2.5" fill="#5a0000" stroke="#1a0000" stroke-width="0.5"/>
<rect x="1046.5" y="645.0" width="5" height="2.5" fill="#5a0000" stroke="#1a0000" stroke-width="0.5"/>
<rect x="1046.5" y="667.5" width="5" height="2.5" fill="#5a0000" stroke="#1a0000" stroke-width="0.5"/>
<rect x="1046.5" y="690.0" width="5" height="2.5" fill="#5a0000" stroke="#1a0000" stroke-width="0.5"/>
<rect x="1046.5" y="712.5" width="5" height="2.5" fill="#5a0000" stroke="#1a0000" stroke-width="0.5"/>
<rect x="1046.5" y="735.0" width="5" height="2.5" fill="#5a0000" stroke="#1a0000" stroke-width="0.5"/>
<rect x="1046.5" y="757.5" width="5" height="2.5" fill="#5a0000" stroke="#1a0000" stroke-width="0.5"/>
<rect x="1046.5" y="780.0" width="5" height="2.5" fill="#5a0000" stroke="#1a0000" stroke-width="0.5"/>
<rect x="1046.5" y="802.5" width="5" height="2.5" fill="#5a0000" stroke="#1a0000" stroke-width="0.5"/>
<rect x="1046.5" y="825.0" width="5" height="2.5" fill="#5a0000" stroke="#1a0000" stroke-width="0.5"/>
<rect x="1046.5" y="847.5" width="5" height="2.5" fill="#5a0000" stroke="#1a0000" stroke-width="0.5"/>
<rect x="1055.5" y="380.5" width="10" height="4.5" fill="#8a0000" stroke="#1a0000" stroke-width="0.5"/>
<rect x="1055.5" y="425.5" width="10" height="4.5" fill="#8a0000" stroke="#1a0000" stroke-width="0.5"/>
<rect x="1055.5" y="470.5" width="10" height="4.5" fill="#8a0000" stroke="#1a0000" stroke-width="0.5"/>
<rect x="1055.5" y="515.5" width="10" height="4.5" fill="#8a0000" stroke="#1a0000" stroke-width="0.5"/>
<rect x="1055.5" y="560.5" width="10" height="4.5" fill="#8a0000" stroke="#1a0000" stroke-width="0.5"/>
<rect x="1055.5" y="605.5" width="10" height="4.5" fill="#8a0000" stroke="#1a0000" stroke-width="0.5"/>
<rect x="1055.5" y="650.5" width="10" height="4.5" fill="#8a0000" stroke="#1a0000" stroke-width="0.5"/>
<rect x="1055.5" y="695.5" width="10" height="4.5" fill="#8a0000" stroke="#1a0000" stroke-width="0.5"/>
<rect x="1055.5" y="740.5" width="10" height="4.5" fill="#8a0000" stroke="#1a0000" stroke-width="0.5"/>
<rect x="1055.5" y="785.5" width="10" height="4.5" fill="#8a0000" stroke="#1a0000" stroke-width="0.5"/>
<rect x="1055.5" y="830.5" width="10" height="4.5" fill="#8a0000" stroke="#1a0000" stroke-width="0.5"/>
<rect x="1055.5" y="875.5" width="10" height="4.5" fill="#8a0000" stroke="#1a0000" stroke-width="0.5"/>
<rect x="1055.5" y="920.5" width="10" height="4.5" fill="#8a0000" stroke="#1a0000" stroke-width="0.5"/>
<rect x="1064.5" y="350" width="23.5" height="617" fill="url(#col)" stroke="#1a0000" stroke-width="0.8"/>
<line x1="1066" y1="355" x2="1086" y2="355" stroke="#3a0000" stroke-width="1.1"/>
<line x1="1066" y1="368.5" x2="1086" y2="368.5" stroke="#3a0000" stroke-width="1.1"/>
<line x1="1066" y1="382.0" x2="1086" y2="382.0" stroke="#3a0000" stroke-width="1.1"/>
<line x1="1066" y1="395.5" x2="1086" y2="395.5" stroke="#3a0000" stroke-width="1.1"/>
<line x1="1066" y1="409.0" x2="1086" y2="409.0" stroke="#3a0000" stroke-width="1.1"/>
<line x1="1066" y1="422.5" x2="1086" y2="422.5" stroke="#3a0000" stroke-width="1.1"/>
<line x1="1066" y1="436.0" x2="1086" y2="436.0" stroke="#3a0000" stroke-width="1.1"/>
<line x1="1066" y1="449.5" x2="1086" y2="449.5" stroke="#3a0000" stroke-width="1.1"/>
<line x1="1066" y1="463.0" x2="1086" y2="463.0" stroke="#3a0000" stroke-width="1.1"/>
<line x1="1066" y1="476.5" x2="1086" y2="476.5" stroke="#3a0000" stroke-width="1.1"/>
<line x1="1066" y1="490.0" x2="1086" y2="490.0" stroke="#3a0000" stroke-width="1.1"/>
<line x1="1066" y1="503.5" x2="1086" y2="503.5" stroke="#3a0000" stroke-width="1.1"/>
<line x1="1066" y1="517.0" x2="1086" y2="517.0" stroke="#3a0000" stroke-width="1.1"/>
<line x1="1066" y1="530.5" x2="1086" y2="530.5" stroke="#3a0000" stroke-width="1.1"/>
<line x1="1066" y1="544.0" x2="1086" y2="544.0" stroke="#3a0000" stroke-width="1.1"/>
<line x1="1066" y1="557.5" x2="1086" y2="557.5" stroke="#3a0000" stroke-width="1.1"/>
<line x1="1066" y1="571.0" x2="1086" y2="571.0" stroke="#3a0000" stroke-width="1.1"/>
<line x1="1076" y1="355" x2="1076" y2="575" stroke="#3a0000" stroke-width="0.8"/>
<line x1="1066.5" y1="355" x2="1066.5" y2="575" stroke="#2a0000" stroke-width="0.7"/>
<line x1="1086" y1="355" x2="1086" y2="575" stroke="#4a0000" stroke-width="0.7"/>
<line x1="1066" y1="727.5" x2="1086" y2="727.5" stroke="#3a0000" stroke-width="1.1"/>
<line x1="1066" y1="740.8" x2="1086" y2="740.8" stroke="#3a0000" stroke-width="1.1"/>
<line x1="1066" y1="754.0999999999999" x2="1086" y2="754.0999999999999" stroke="#3a0000" stroke-width="1.1"/>
<line x1="1066" y1="767.3999999999999" x2="1086" y2="767.3999999999999" stroke="#3a0000" stroke-width="1.1"/>
<line x1="1066" y1="780.6999999999998" x2="1086" y2="780.6999999999998" stroke="#3a0000" stroke-width="1.1"/>
<line x1="1066" y1="793.9999999999998" x2="1086" y2="793.9999999999998" stroke="#3a0000" stroke-width="1.1"/>
<line x1="1066" y1="807.2999999999997" x2="1086" y2="807.2999999999997" stroke="#3a0000" stroke-width="1.1"/>
<line x1="1066" y1="820.5999999999997" x2="1086" y2="820.5999999999997" stroke="#3a0000" stroke-width="1.1"/>
<line x1="1066" y1="833.8999999999996" x2="1086" y2="833.8999999999996" stroke="#3a0000" stroke-width="1.1"/>
<line x1="1066" y1="847.1999999999996" x2="1086" y2="847.1999999999996" stroke="#3a0000" stroke-width="1.1"/>
<line x1="1066" y1="860.4999999999995" x2="1086" y2="860.4999999999995" stroke="#3a0000" stroke-width="1.1"/>
<line x1="1066" y1="873.7999999999995" x2="1086" y2="873.7999999999995" stroke="#3a0000" stroke-width="1.1"/>
<line x1="1066" y1="887.0999999999995" x2="1086" y2="887.0999999999995" stroke="#3a0000" stroke-width="1.1"/>
<line x1="1066" y1="900.3999999999994" x2="1086" y2="900.3999999999994" stroke="#3a0000" stroke-width="1.1"/>
<line x1="1066" y1="913.6999999999994" x2="1086" y2="913.6999999999994" stroke="#3a0000" stroke-width="1.1"/>
<line x1="1066" y1="926.9999999999993" x2="1086" y2="926.9999999999993" stroke="#3a0000" stroke-width="1.1"/>
<line x1="1066" y1="940.2999999999993" x2="1086" y2="940.2999999999993" stroke="#3a0000" stroke-width="1.1"/>
<line x1="1066" y1="953.5999999999992" x2="1086" y2="953.5999999999992" stroke="#3a0000" stroke-width="1.1"/>
<line x1="1076" y1="727.5" x2="1076" y2="965" stroke="#3a0000" stroke-width="0.8"/>
<line x1="1066.5" y1="727.5" x2="1066.5" y2="965" stroke="#2a0000" stroke-width="0.7"/>
<line x1="1086" y1="727.5" x2="1086" y2="965" stroke="#4a0000" stroke-width="0.7"/>
<rect x="1088" y="918" width="3" height="2.5" fill="#b00000" stroke="#1a0000" stroke-width="0.4"/>
<rect x="1088" y="940" width="3" height="2.5" fill="#b00000" stroke="#1a0000" stroke-width="0.4"/>
<rect x="1041.5" y="295" width="84.5" height="2.2" fill="#8a0000" stroke="#1a0000" stroke-width="0.5"/>
<rect x="1041.5" y="318.5" width="84.5" height="2" fill="#8a0000" stroke="#1a0000" stroke-width="0.4"/>
<rect x="1041.2" y="295" width="2" height="48" fill="#a00000" stroke="#1a0000" stroke-width="0.4"/>
<rect x="1055.2" y="295" width="2" height="48" fill="#a00000" stroke="#1a0000" stroke-width="0.4"/>
<rect x="1095.2" y="295" width="2" height="48" fill="#a00000" stroke="#1a0000" stroke-width="0.4"/>
<rect x="1124.2" y="295" width="2" height="48" fill="#a00000" stroke="#1a0000" stroke-width="0.4"/>
<rect x="1058" y="297" width="1.5" height="45" fill="#a00000"/>
<path d="M1044 333H1055V342H1044Z" fill="#cc0000" stroke="#1a0000" stroke-width="0.4"/>
<rect x="1041.5" y="342" width="84.5" height="9" fill="#c20000" stroke="#1a0000" stroke-width="0.6"/>
<rect x="1041.5" y="342" width="13" height="9" fill="#500000" stroke="#1a0000" stroke-width="0.4"/>
<rect x="1096" y="342" width="30" height="9" fill="#dd0000" stroke="#1a0000" stroke-width="0.4"/>
<rect x="1041" y="351" width="85" height="2.5" fill="#220000"/>
<rect x="1041.5" y="353.5" width="84.5" height="1.5" fill="#8a0000"/>
<path d="M1052 354L1055 354L1068 375L1065 376Z" fill="#7a0000" stroke="#1a0000" stroke-width="0.6"/>
<path d="M1098 354L1101 354L1087 375L1084 376Z" fill="#111" stroke="#1a0000" stroke-width="0.6"/>
<rect x="1041.5" y="522" width="84.5" height="2.2" fill="#8a0000" stroke="#1a0000" stroke-width="0.5"/>
<rect x="1041.5" y="545.5" width="84.5" height="2" fill="#8a0000" stroke="#1a0000" stroke-width="0.4"/>
<rect x="1041.2" y="522" width="2" height="48" fill="#a00000" stroke="#1a0000" stroke-width="0.4"/>
<rect x="1055.2" y="522" width="2" height="48" fill="#a00000" stroke="#1a0000" stroke-width="0.4"/>
<rect x="1095.2" y="522" width="2" height="48" fill="#a00000" stroke="#1a0000" stroke-width="0.4"/>
<rect x="1124.2" y="522" width="2" height="48" fill="#a00000" stroke="#1a0000" stroke-width="0.4"/>
<rect x="1058" y="524" width="1.5" height="45" fill="#a00000"/>
<path d="M1044 560H1055V569H1044Z" fill="#cc0000" stroke="#1a0000" stroke-width="0.4"/>
<rect x="1041.5" y="569" width="84.5" height="9" fill="#c20000" stroke="#1a0000" stroke-width="0.6"/>
<rect x="1041.5" y="569" width="13" height="9" fill="#500000" stroke="#1a0000" stroke-width="0.4"/>
<rect x="1096" y="569" width="30" height="9" fill="#dd0000" stroke="#1a0000" stroke-width="0.4"/>
<rect x="1041" y="578" width="85" height="2.5" fill="#220000"/>
<rect x="1041.5" y="580.5" width="84.5" height="1.5" fill="#8a0000"/>
<path d="M1052 581L1055 581L1068 602L1065 603Z" fill="#7a0000" stroke="#1a0000" stroke-width="0.6"/>
<path d="M1098 581L1101 581L1087 602L1084 603Z" fill="#111" stroke="#1a0000" stroke-width="0.6"/>
<rect x="1041.5" y="747" width="84.5" height="2.2" fill="#8a0000" stroke="#1a0000" stroke-width="0.5"/>
<rect x="1041.5" y="770.5" width="84.5" height="2" fill="#8a0000" stroke="#1a0000" stroke-width="0.4"/>
<rect x="1041.2" y="747" width="2" height="48" fill="#a00000" stroke="#1a0000" stroke-width="0.4"/>
<rect x="1055.2" y="747" width="2" height="48" fill="#a00000" stroke="#1a0000" stroke-width="0.4"/>
<rect x="1095.2" y="747" width="2" height="48" fill="#a00000" stroke="#1a0000" stroke-width="0.4"/>
<rect x="1124.2" y="747" width="2" height="48" fill="#a00000" stroke="#1a0000" stroke-width="0.4"/>
<rect x="1058" y="749" width="1.5" height="45" fill="#a00000"/>
<path d="M1044 785H1055V794H1044Z" fill="#cc0000" stroke="#1a0000" stroke-width="0.4"/>
<rect x="1041.5" y="794" width="84.5" height="9" fill="#c20000" stroke="#1a0000" stroke-width="0.6"/>
<rect x="1041.5" y="794" width="13" height="9" fill="#500000" stroke="#1a0000" stroke-width="0.4"/>
<rect x="1096" y="794" width="30" height="9" fill="#dd0000" stroke="#1a0000" stroke-width="0.4"/>
<rect x="1041" y="803" width="85" height="2.5" fill="#220000"/>
<rect x="1041.5" y="805.5" width="84.5" height="1.5" fill="#8a0000"/>
<path d="M1052 806L1055 806L1068 827L1065 828Z" fill="#7a0000" stroke="#1a0000" stroke-width="0.6"/>
<path d="M1098 806L1101 806L1087 827L1084 828Z" fill="#111" stroke="#1a0000" stroke-width="0.6"/>
<rect x="1052" y="967" width="48" height="16" fill="url(#base)" stroke="#1a0000" stroke-width="0.8"/>
<line x1="1052" y1="968.5" x2="1100" y2="968.5" stroke="#200000" stroke-width="1.5"/>
<line x1="1058" y1="969" x2="1058" y2="982" stroke="#400000" stroke-width="0.8"/>
<line x1="1066" y1="969" x2="1066" y2="982" stroke="#400000" stroke-width="0.8"/>
<line x1="1074" y1="969" x2="1074" y2="982" stroke="#400000" stroke-width="0.8"/>
<line x1="1082" y1="969" x2="1082" y2="982" stroke="#400000" stroke-width="0.8"/>
<line x1="1090" y1="969" x2="1090" y2="982" stroke="#400000" stroke-width="0.8"/>
<rect x="1055" y="943" width="9" height="17" fill="#d00000" stroke="#1a0000" stroke-width="0.7"/>
<rect x="1050" y="947" width="5" height="10" fill="#d8d020" stroke="#1a0000" stroke-width="0.4"/>
<rect x="1039" y="292" width="8" height="8" fill="#0a0a0a"/>
<path d="M1052 280 Q1051 284 1045 284 Q1039 284.5 1039 290 Q1039 295 1045 295 Q1052 295.5 1053 299" fill="none" stroke="#0a0a0a" stroke-width="6.2"/>
<path d="M1052 280 Q1051 284 1045 284 Q1039 284.5 1039 290 Q1039 295 1045 295 Q1052 295.5 1053 299" fill="none" stroke="#d80000" stroke-width="3.6"/>
<rect x="1048" y="270" width="7" height="10.5" fill="#0a0a0a"/>
<rect x="1050.5" y="273" width="3" height="2.5" fill="#d02020"/>
<rect x="1048.8" y="276.5" width="1.5" height="2.5" fill="#8a9aaa"/>
<rect x="1053" y="278" width="5" height="3" fill="#0a0a0a"/>
<rect x="1044" y="299" width="14" height="2.6" fill="#0a0a0a"/>
<rect x="1047" y="299.5" width="8" height="1.4" fill="#c02020"/>
<rect x="1027" y="427" width="8" height="8" fill="#0a0a0a"/>
<path d="M1040 415 Q1039 419 1033 419 Q1027 419.5 1027 425 Q1027 430 1033 430 Q1040 430.5 1041 434" fill="none" stroke="#0a0a0a" stroke-width="6.2"/>
<path d="M1040 415 Q1039 419 1033 419 Q1027 419.5 1027 425 Q1027 430 1033 430 Q1040 430.5 1041 434" fill="none" stroke="#d80000" stroke-width="3.6"/>
<rect x="1036" y="405" width="7" height="10.5" fill="#0a0a0a"/>
<rect x="1038.5" y="408" width="3" height="2.5" fill="#d02020"/>
<rect x="1036.8" y="411.5" width="1.5" height="2.5" fill="#8a9aaa"/>
<rect x="1041" y="413" width="5" height="3" fill="#0a0a0a"/>
<rect x="1032" y="434" width="14" height="2.6" fill="#0a0a0a"/>
<rect x="1035" y="434.5" width="8" height="1.4" fill="#c02020"/>
<rect x="1027" y="832" width="8" height="8" fill="#0a0a0a"/>
<path d="M1040 820 Q1039 824 1033 824 Q1027 824.5 1027 830 Q1027 835 1033 835 Q1040 835.5 1041 839" fill="none" stroke="#0a0a0a" stroke-width="6.2"/>
<path d="M1040 820 Q1039 824 1033 824 Q1027 824.5 1027 830 Q1027 835 1033 835 Q1040 835.5 1041 839" fill="none" stroke="#d80000" stroke-width="3.6"/>
<rect x="1036" y="810" width="7" height="10.5" fill="#0a0a0a"/>
<rect x="1038.5" y="813" width="3" height="2.5" fill="#d02020"/>
<rect x="1036.8" y="816.5" width="1.5" height="2.5" fill="#8a9aaa"/>
<rect x="1041" y="818" width="5" height="3" fill="#0a0a0a"/>
<rect x="1032" y="839" width="14" height="2.6" fill="#0a0a0a"/>
<rect x="1035" y="839.5" width="8" height="1.4" fill="#c02020"/>
<rect x="1035" y="631" width="7" height="10" fill="#0a0a0a"/>
<rect x="1037" y="633" width="3" height="3" fill="#e8e8f0"/>
<rect x="1029" y="645" width="14" height="3" fill="#0a0a0a"/>
<rect x="1031" y="645" width="4" height="2" fill="#c00000"/>
<path d="M1040 641 Q1043 648 1039 652 Q1036 658 1040 664" fill="none" stroke="#0a0a0a" stroke-width="4.5"/>
<path d="M1040 641 Q1043 648 1039 652 Q1036 658 1040 664" fill="none" stroke="#d00000" stroke-width="2.2"/>
<rect x="1030" y="650" width="8" height="10" fill="#0a0a0a"/>
<rect x="1032" y="652" width="3" height="5" fill="#333"/>
<rect x="1036" y="662" width="10" height="3" fill="#0a0a0a"/>
<rect x="1035" y="668" width="10" height="2.5" fill="#0a0a0a"/>
<rect x="1039.5" y="437" width="4.5" height="98" fill="url(#pipe)" stroke="#1a0000" stroke-width="0.5"/>
<rect x="1039.5" y="670" width="4.5" height="87" fill="url(#pipe)" stroke="#1a0000" stroke-width="0.5"/>
<rect x="1039.5" y="841" width="4.5" height="57" fill="url(#pipe)" stroke="#1a0000" stroke-width="0.5"/>
<path d="M1039.5 535 Q1039.5 541 1045 541 H1047 V537 H1045 Q1044 537 1044 535Z" fill="#c00000" stroke="#1a0000" stroke-width="0.5"/>
<path d="M1039.5 757 Q1039.5 763 1045 763 H1047 V759 H1045 Q1044 759 1044 757Z" fill="#c00000" stroke="#1a0000" stroke-width="0.5"/>
<path d="M1039.5 898 Q1039.5 906 1046 906 H1050 V901.5 H1046 Q1044 901.5 1044 898Z" fill="#c00000" stroke="#1a0000" stroke-width="0.5"/>
<rect x="1037" y="442" width="9" height="2.5" fill="#0a0a0a"/>
<rect x="1037" y="531" width="9" height="2.5" fill="#0a0a0a"/>
<rect x="1037" y="713" width="9" height="2.5" fill="#0a0a0a"/>
<rect x="1037" y="757" width="9" height="2.5" fill="#0a0a0a"/>
<rect x="1037" y="848" width="9" height="2.5" fill="#0a0a0a"/>
<rect x="1037" y="871" width="9" height="2.5" fill="#0a0a0a"/>
<rect x="1037" y="892" width="9" height="2.5" fill="#0a0a0a"/>
<circle cx="1062" cy="662" r="2.2" fill="none" stroke="#a00000" stroke-width="1"/>
<circle cx="1091.5" cy="662" r="2.2" fill="none" stroke="#a00000" stroke-width="1"/>
<circle cx="1062" cy="845" r="2.2" fill="none" stroke="#a00000" stroke-width="1"/>
<circle cx="1091.5" cy="845" r="2.2" fill="none" stroke="#a00000" stroke-width="1"/>
<rect x="1062" y="352" width="29" height="4" fill="#b00000" stroke="#1a0000" stroke-width="0.5"/>
</svg>
</body></html>
